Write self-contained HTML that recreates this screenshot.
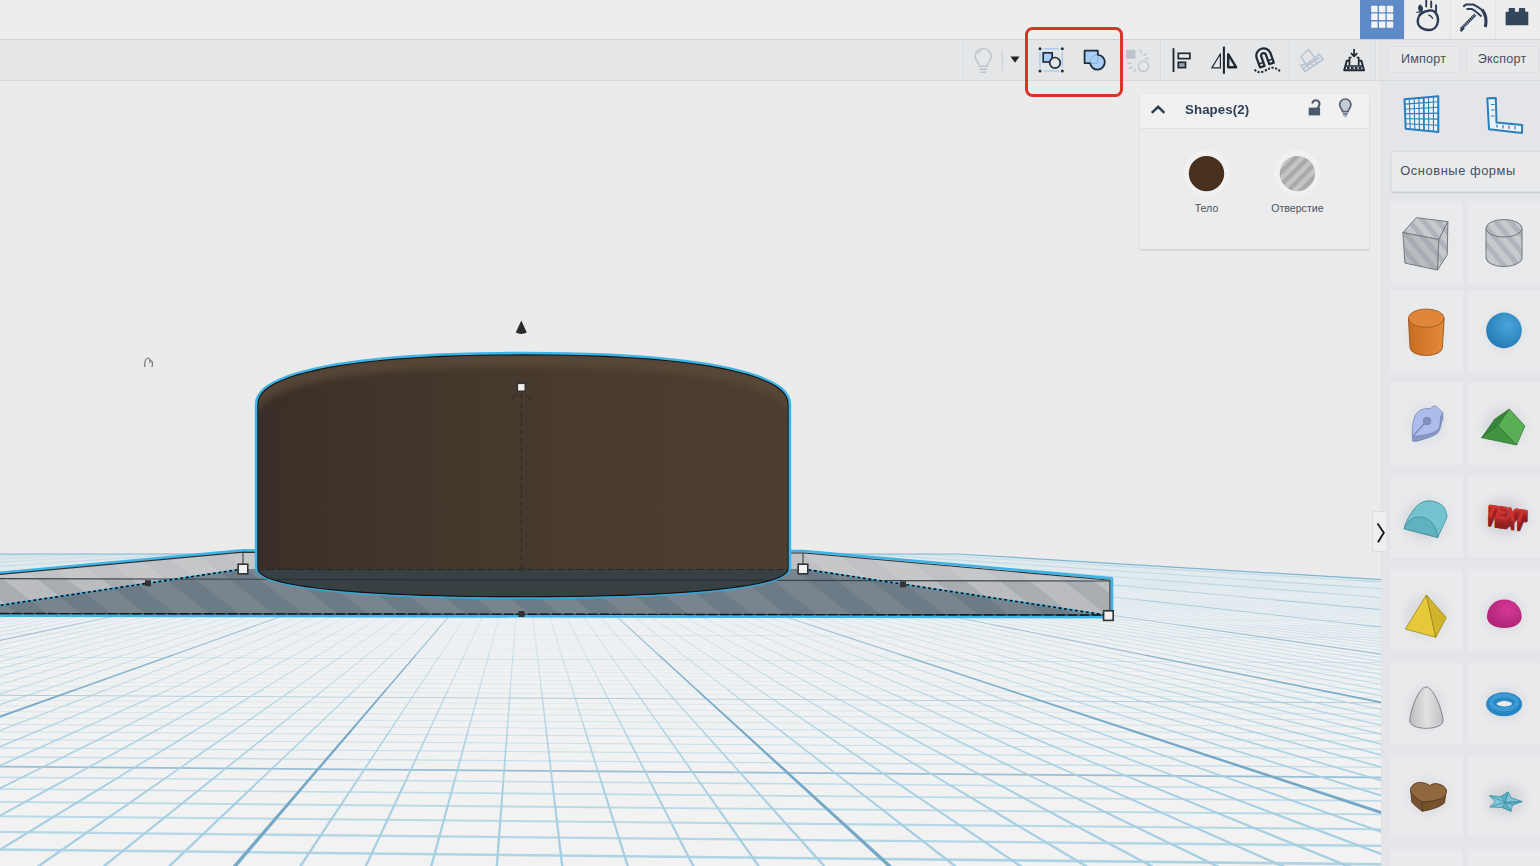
<!DOCTYPE html>
<html lang="ru"><head><meta charset="utf-8"><title>Tinkercad</title>
<style>
html,body{margin:0;padding:0;overflow:hidden}
html{width:1540px;height:866px}
body{width:1540px;height:866px;overflow:hidden;position:relative;background:#ebebeb;font-family:"Liberation Sans",sans-serif;color:#3c4858}
#scene{position:absolute;left:0;top:0}
#topbar{position:absolute;left:0;top:0;width:1540px;height:38.5px;background:#ededed}
#toolbar{position:absolute;left:0;top:38.5px;width:1540px;height:42px;background:#e5e6e8;border-top:1.5px solid #ccd2d8;border-bottom:1.5px solid #d6dadd;box-sizing:border-box}
.nav{position:absolute;top:0;height:38.5px;box-sizing:border-box;border-left:1px solid #e3e4e6}
.nav.on{background:#5f8ac8;border-left:none}
.nav svg{position:absolute;left:0;top:0}
.sep{position:absolute;top:40px;height:40px;width:1px;background:#d9dcdf;border-right:1px solid #e9ebed}
.tbtn{position:absolute;top:46px;height:27px;box-sizing:border-box;border:1px solid #dcdee1;border-radius:3px;background:#e8e9eb;font-size:12.6px;line-height:25px;text-align:center;color:#46505e;letter-spacing:.2px}
#ticons{position:absolute;left:960px;top:40px}
#redbox{position:absolute;left:1025.3px;top:27.4px;width:97.8px;height:69.6px;box-sizing:border-box;border:3.9px solid #dc3228;border-radius:7.5px}
#insp{position:absolute;left:1140px;top:93.5px;width:229px;height:155px;background:#ececec;border-radius:2px;box-shadow:0 1px 2px rgba(120,130,140,.35)}
#insp .hd{position:absolute;left:0;top:0;width:229px;height:35.5px;background:#f1f1f1;border-bottom:1px solid #dfe1e3;box-sizing:border-box}
#insp .ttl{position:absolute;left:44.5px;top:7px;font-size:13.6px;font-weight:bold;color:#2d3e54;letter-spacing:.1px;line-height:18px;transform-origin:0 50%;transform:scaleX(.975)}
.sw{position:absolute;width:46px;height:46px;border-radius:50%;background:#f1f1f1}
.lbl{position:absolute;top:108px;width:90px;text-align:center;font-size:10.6px;color:#4b5563;line-height:13px}
#side{position:absolute;left:1381px;top:81px;width:159px;height:785px;background:#e4e5e8;border-left:1px solid #dfe1e4;box-sizing:border-box}
#dd{position:absolute;left:8.8px;top:70px;width:160px;height:40.5px;box-sizing:border-box;background:#e9eaec;border:1px solid #dcdfe2;border-radius:3px;box-shadow:0 1px 1.5px rgba(120,130,140,.3);font-size:12.9px;line-height:38px;padding-left:8.5px;color:#465162;letter-spacing:.55px}
.tile{position:absolute;width:73px;background:#e9eaec;border-radius:2px}
.tile svg{position:absolute;left:0;top:0}
#collapse{position:absolute;left:1371.5px;top:511.3px;width:14.5px;height:41px;background:#efefef;border:1px solid #dcdde0;border-right:none;box-sizing:border-box;border-radius:2px 0 0 2px}
</style></head><body>

<svg id="scene" width="1540" height="866" viewBox="0 0 1540 866">
<defs>
<linearGradient id="wpg" x1="0" y1="554" x2="0" y2="866" gradientUnits="userSpaceOnUse"><stop offset="0" stop-color="#dfe9ed"/><stop offset=".06" stop-color="#e6edf0"/><stop offset=".16" stop-color="#ecf0f2"/><stop offset=".3" stop-color="#f0f1f2"/><stop offset="1" stop-color="#f2f2f2"/></linearGradient>
<linearGradient id="hg" x1="0" y1="554" x2="0" y2="866" gradientUnits="userSpaceOnUse"><stop offset="0" stop-color="#b4d7e6" stop-opacity=".08"/><stop offset=".25" stop-color="#b4d7e6" stop-opacity=".22"/><stop offset=".6" stop-color="#b0d5e5" stop-opacity=".62"/><stop offset="1" stop-color="#a9d1e3" stop-opacity=".95"/></linearGradient>
<linearGradient id="hg2" x1="0" y1="554" x2="0" y2="866" gradientUnits="userSpaceOnUse"><stop offset="0" stop-color="#8fbbd2" stop-opacity=".15"/><stop offset=".25" stop-color="#8fbbd2" stop-opacity=".5"/><stop offset=".6" stop-color="#8fbbd2" stop-opacity=".9"/><stop offset="1" stop-color="#8fbbd2" stop-opacity="1"/></linearGradient>
<linearGradient id="vg" x1="0" y1="554" x2="0" y2="866" gradientUnits="userSpaceOnUse"><stop offset="0" stop-color="#a9d1e3" stop-opacity=".3"/><stop offset=".15" stop-color="#a9d1e3" stop-opacity=".55"/><stop offset=".4" stop-color="#a9d1e3" stop-opacity=".9"/><stop offset="1" stop-color="#a9d1e3" stop-opacity="1"/></linearGradient>
<linearGradient id="vg2" x1="0" y1="554" x2="0" y2="866" gradientUnits="userSpaceOnUse"><stop offset="0" stop-color="#72a6c4" stop-opacity=".4"/><stop offset=".15" stop-color="#72a6c4" stop-opacity=".7"/><stop offset=".4" stop-color="#72a6c4" stop-opacity="1"/><stop offset="1" stop-color="#6ea2c1" stop-opacity="1"/></linearGradient>
<clipPath id="wpc"><path d="M0 554H957L1540 589.3V866H0Z"/></clipPath>
<linearGradient id="cyl" x1="256" y1="0" x2="790" y2="0" gradientUnits="userSpaceOnUse"><stop offset="0" stop-color="#3a2f28"/><stop offset=".25" stop-color="#41352b"/><stop offset=".6" stop-color="#493b2e"/><stop offset="1" stop-color="#4c3e30"/></linearGradient>
<pattern id="st1" width="64" height="64" patternUnits="userSpaceOnUse" patternTransform="skewX(52)"><rect width="64" height="64" fill="#babcbf"/><rect width="30" height="64" fill="#a9adb1"/></pattern>
<pattern id="st2" width="64" height="64" patternUnits="userSpaceOnUse" patternTransform="skewX(52)"><rect width="64" height="64" fill="#78858f"/><rect width="30" height="64" fill="#6d7b87"/></pattern>
<pattern id="st3" width="64" height="64" patternUnits="userSpaceOnUse" patternTransform="skewX(52)"><rect width="64" height="64" fill="#c5c7c9"/><rect width="30" height="64" fill="#bfc1c4"/></pattern>
<filter id="bl" x="-5%" y="-50%" width="110%" height="200%"><feGaussianBlur stdDeviation="3.5"/></filter>
<clipPath id="cylc"><path d="M258.0 405.0L258.5 400.3L260.0 396.5L262.4 392.9L265.9 389.6L270.3 386.4L275.6 383.3L281.9 380.4L289.2 377.6L297.3 375.0L306.3 372.5L316.2 370.2L327.0 368.0L338.5 366.0L350.9 364.1L364.0 362.4L378.0 360.9L392.6 359.5L408.1 358.3L424.2 357.3L441.2 356.5L459.0 355.8L477.9 355.4L498.3 355.1L523.0 355.0L547.7 355.1L568.1 355.4L587.0 355.8L604.8 356.5L621.8 357.3L637.9 358.3L653.4 359.5L668.0 360.9L682.0 362.4L695.1 364.1L707.5 366.0L719.0 368.0L729.8 370.2L739.7 372.5L748.7 375.0L756.8 377.6L764.1 380.4L770.4 383.3L775.7 386.4L780.1 389.6L783.6 392.9L786.0 396.5L787.5 400.3L788.0 405.0L788.0 568.0L787.5 570.7L786.0 572.9L783.6 574.9L780.1 576.8L775.7 578.7L770.4 580.4L764.1 582.1L756.8 583.7L748.7 585.2L739.7 586.6L729.8 587.9L719.0 589.2L707.5 590.3L695.1 591.4L682.0 592.4L668.0 593.2L653.4 594.0L637.9 594.7L621.8 595.3L604.8 595.8L587.0 596.1L568.1 596.4L547.7 596.5L523.0 596.6L498.3 596.5L477.9 596.4L459.0 596.1L441.2 595.8L424.2 595.3L408.1 594.7L392.6 594.0L378.0 593.2L364.0 592.4L350.9 591.4L338.5 590.3L327.0 589.2L316.2 587.9L306.3 586.6L297.3 585.2L289.2 583.7L281.9 582.1L275.6 580.4L270.3 578.7L265.9 576.8L262.4 574.9L260.0 572.9L258.5 570.7L258.0 568.0Z"/></clipPath>
</defs>
<path d="M0 554H957L1540 589.3V866H0Z" fill="url(#wpg)"/>
<g clip-path="url(#wpc)">
<path fill="url(#hg)" d="M0 868.03L1540 885.35V888.34L0 870.87ZM0 848.34L1540 864.65V867.31L0 850.86ZM0 830.82L1540 846.24V848.60L0 833.07ZM0 815.13L1540 829.75V831.87L0 817.16ZM0 801.00L1540 814.89V816.81L0 802.83ZM0 788.21L1540 801.44V803.18L0 789.87ZM0 776.57L1540 789.21V790.79L0 778.08ZM0 756.19L1540 767.78V769.11L0 757.46ZM0 747.21L1540 758.34V759.57L0 748.38ZM0 738.93L1540 749.62V750.76L0 740.01ZM0 731.25L1540 741.55V742.61L0 732.25ZM0 724.11L1540 734.05V735.03L0 725.05ZM0 717.47L1540 727.07V727.98L0 718.34ZM0 711.27L1540 720.55V721.40L0 712.08ZM0 705.46L1540 714.45V715.25L0 706.23ZM0 700.02L1540 708.72V709.47L0 700.74ZM0 690.09L1540 698.28V698.95L0 690.72ZM0 685.55L1540 693.51V694.14L0 686.15ZM0 681.26L1540 689.00V689.59L0 681.83ZM0 677.20L1540 684.73V685.29L0 677.74ZM0 673.36L1540 680.69V681.22L0 673.86ZM0 669.71L1540 676.85V677.36L0 670.19ZM0 666.24L1540 673.21V673.69L0 666.70ZM0 662.94L1540 669.74V670.20L0 663.38ZM0 659.80L1540 666.43V666.87L0 660.21ZM0 653.94L1540 660.28V660.67L0 654.32ZM0 651.20L1540 657.40V657.78L0 651.57ZM0 648.59L1540 654.65V655.01L0 648.94ZM0 646.08L1540 652.02V652.37L0 646.42ZM0 643.68L1540 649.49V649.83L0 644.00ZM0 641.38L1540 647.07V647.39L0 641.69ZM0 639.17L1540 644.75V645.06L0 639.46ZM0 637.04L1540 642.51V642.81L0 637.33ZM0 635.00L1540 640.37V640.65L0 635.27ZM0 631.14L1540 636.31V636.57L0 631.39ZM0 629.32L1540 634.39V634.64L0 629.56ZM0 627.56L1540 632.54V632.78L0 627.79ZM0 625.86L1540 630.75V630.99L0 626.08ZM0 624.22L1540 629.03V629.26L0 624.44ZM0 622.63L1540 627.36V627.58L0 622.84ZM0 621.10L1540 625.75V625.97L0 621.30ZM0 619.62L1540 624.19V624.40L0 619.82ZM0 618.18L1540 622.69V622.89L0 618.38ZM0 615.45L1540 619.81V620.00L0 615.63ZM0 614.15L1540 618.44V618.62L0 614.32ZM0 612.88L1540 617.11V617.29L0 613.05ZM0 611.66L1540 615.82V615.99L0 611.82ZM0 610.46L1540 614.57V614.74L0 610.62ZM0 609.31L1540 613.35V613.52L0 609.46ZM0 608.18L1540 612.17V612.33L0 608.33ZM0 607.09L1540 611.02V611.18L0 607.24ZM0 606.03L1540 609.91V610.06L0 606.17ZM0 603.99L1540 607.77V607.91L0 604.13ZM0 603.02L1540 606.74V606.88L0 603.15ZM0 602.06L1540 605.74V605.87L0 602.19ZM0 601.14L1540 604.76V604.89L0 601.26ZM0 600.23L1540 603.81V603.94L0 600.35ZM0 599.35L1540 602.88V603.01L0 599.47ZM0 598.49L1540 601.98V602.10L0 598.61ZM0 597.65L1540 601.10V601.22L0 597.77ZM0 596.84L1540 600.24V600.36L0 596.95ZM0 595.26L1540 598.58V598.69L0 595.36ZM0 594.50L1540 597.78V597.89L0 594.60ZM0 593.76L1540 597.00V597.11L0 593.85ZM0 593.03L1540 596.24V596.34L0 593.13ZM0 592.32L1540 595.49V595.59L0 592.42ZM0 591.63L1540 594.76V594.86L0 591.72ZM0 590.95L1540 594.05V594.15L0 591.04ZM0 590.29L1540 593.35V593.45L0 590.37ZM0 589.64L1540 592.67V592.76L0 589.72ZM0 588.38L1540 591.35V591.44L0 588.46ZM0 587.77L1540 590.71V590.80L0 587.85ZM0 587.18L1540 590.09V590.17L0 587.26ZM0 586.59L1540 589.47V589.55L0 586.67ZM0 586.02L1540 588.87V588.95L0 586.10ZM0 585.46L1540 588.28V588.36L0 585.54ZM0 584.91L1540 587.71V587.78L0 584.99ZM0 584.37L1540 587.14V587.22L0 584.45ZM0 583.85L1540 586.59V586.66L0 583.92ZM0 582.82L1540 585.51V585.58L0 582.89ZM0 582.33L1540 584.99V585.06L0 582.39ZM0 581.84L1540 584.47V584.54L0 581.90ZM0 581.36L1540 583.97V584.04L0 581.42ZM0 580.89L1540 583.47V583.54L0 580.95ZM0 580.43L1540 582.99V583.05L0 580.49ZM0 579.97L1540 582.51V582.58L0 580.03ZM0 579.53L1540 582.04V582.11L0 579.59ZM0 579.09L1540 581.58V581.65L0 579.15ZM0 578.24L1540 580.69V580.75L0 578.30ZM0 577.82L1540 580.25V580.31L0 577.88ZM0 577.42L1540 579.83V579.88L0 577.47ZM0 577.02L1540 579.40V579.46L0 577.07ZM0 576.62L1540 578.99V579.05L0 576.68ZM0 576.24L1540 578.58V578.64L0 576.29ZM0 575.85L1540 578.18V578.24L0 575.91ZM0 575.48L1540 577.79V577.84L0 575.53ZM0 575.11L1540 577.40V577.45L0 575.16ZM0 574.39L1540 576.65V576.70L0 574.44ZM0 574.04L1540 576.28V576.33L0 574.09ZM0 573.70L1540 575.91V575.96L0 573.74ZM0 573.36L1540 575.56V575.61L0 573.40ZM0 573.02L1540 575.21V575.25L0 573.07ZM0 572.69L1540 574.86V574.91L0 572.74ZM0 572.37L1540 574.52V574.56L0 572.41ZM0 572.05L1540 574.18V574.23L0 572.09ZM0 571.74L1540 573.85V573.90L0 571.78ZM0 571.12L1540 573.21V573.25L0 571.16ZM0 570.82L1540 572.89V572.93L0 570.86ZM0 570.52L1540 572.58V572.62L0 570.56ZM0 570.23L1540 572.27V572.31L0 570.27ZM0 569.95L1540 571.97V572.01L0 569.98ZM0 569.66L1540 571.67V571.71L0 569.70ZM0 569.38L1540 571.38V571.42L0 569.42ZM0 569.11L1540 571.09V571.13L0 569.14ZM0 568.84L1540 570.80V570.84L0 568.87ZM0 568.30L1540 570.24V570.28L0 568.34ZM0 568.04L1540 569.97V570.01L0 568.08ZM0 567.79L1540 569.70V569.74L0 567.82ZM0 567.53L1540 569.43V569.47L0 567.57ZM0 567.28L1540 569.17V569.21L0 567.32ZM0 567.04L1540 568.91V568.95L0 567.07ZM0 566.79L1540 568.66V568.69L0 566.83ZM0 566.55L1540 568.40V568.44L0 566.58ZM0 566.32L1540 568.15V568.19L0 566.35ZM0 565.85L1540 567.67V567.70L0 565.88ZM0 565.62L1540 567.43V567.46L0 565.65ZM0 565.40L1540 567.19V567.22L0 565.43ZM0 565.18L1540 566.96V566.99L0 565.21ZM0 564.96L1540 566.73V566.76L0 564.99ZM0 564.74L1540 566.50V566.53L0 564.77ZM0 564.53L1540 566.27V566.30L0 564.55ZM0 564.32L1540 566.05V566.08L0 564.34ZM0 564.11L1540 565.83V565.86L0 564.13ZM0 563.70L1540 565.40V565.43L0 563.72ZM0 563.50L1540 565.19V565.22L0 563.52ZM0 563.30L1540 564.98V565.01L0 563.32ZM0 563.10L1540 564.77V564.80L0 563.13ZM0 562.91L1540 564.57V564.60L0 562.93ZM0 562.72L1540 564.37V564.40L0 562.74ZM0 562.53L1540 564.17V564.20L0 562.55ZM0 562.34L1540 563.97V564.00L0 562.36ZM0 562.15L1540 563.78V563.81L0 562.18ZM0 561.79L1540 563.40V563.42L0 561.82ZM0 561.61L1540 563.21V563.23L0 561.64ZM0 561.44L1540 563.02V563.05L0 561.46ZM0 561.26L1540 562.84V562.86L0 561.28ZM0 561.09L1540 562.66V562.68L0 561.11ZM0 560.92L1540 562.48V562.50L0 560.94ZM0 560.75L1540 562.30V562.33L0 560.77ZM0 560.58L1540 562.13V562.15L0 560.60ZM0 560.42L1540 561.95V561.98L0 560.44ZM0 560.09L1540 561.61V561.63L0 560.11ZM0 559.93L1540 561.44V561.47L0 559.95ZM0 559.77L1540 561.28V561.30L0 559.79ZM0 559.62L1540 561.11V561.13L0 559.64ZM0 559.46L1540 560.95V560.97L0 559.48ZM0 559.31L1540 560.79V560.81L0 559.33ZM0 559.16L1540 560.63V560.65L0 559.18ZM0 559.01L1540 560.47V560.49L0 559.03ZM0 558.86L1540 560.32V560.34L0 558.88ZM0 558.57L1540 560.01V560.03L0 558.59ZM0 558.42L1540 559.86V559.88L0 558.44ZM0 558.28L1540 559.71V559.73L0 558.30ZM0 558.14L1540 559.56V559.58L0 558.16ZM0 558.00L1540 559.41V559.43L0 558.02ZM0 557.86L1540 559.27V559.29L0 557.88ZM0 557.73L1540 559.12V559.14L0 557.74ZM0 557.59L1540 558.98V559.00L0 557.61ZM0 557.46L1540 558.84V558.86L0 557.47ZM0 557.19L1540 558.56V558.58L0 557.21ZM0 557.06L1540 558.43V558.44L0 557.08ZM0 556.93L1540 558.29V558.31L0 556.95ZM0 556.81L1540 558.16V558.17L0 556.82ZM0 556.68L1540 558.02V558.04L0 556.70ZM0 556.55L1540 557.89V557.91L0 556.57ZM0 556.43L1540 557.76V557.78L0 556.45ZM0 556.31L1540 557.63V557.65L0 556.32ZM0 556.19L1540 557.50V557.52L0 556.20ZM0 555.95L1540 557.25V557.27L0 555.96ZM0 555.83L1540 557.13V557.14L0 555.84ZM0 555.71L1540 557.00V557.02L0 555.73ZM0 555.59L1540 556.88V556.90L0 555.61ZM0 555.48L1540 556.76V556.78L0 555.49ZM0 555.37L1540 556.64V556.66L0 555.38ZM0 555.25L1540 556.52V556.54L0 555.27ZM0 555.14L1540 556.41V556.42L0 555.16ZM0 555.03L1540 556.29V556.30L0 555.04ZM0 554.81L1540 556.06V556.07L0 554.83ZM0 554.70L1540 555.95V555.96L0 554.72ZM0 554.60L1540 555.83V555.85L0 554.61ZM0 554.49L1540 555.72V555.74L0 554.50ZM0 554.38L1540 555.61V555.63L0 554.40ZM0 554.28L1540 555.50V555.52L0 554.29ZM0 554.18L1540 555.39V555.41L0 554.19ZM0 554.07L1540 555.28V555.30L0 554.09ZM0 553.97L1540 555.18V555.19L0 553.99ZM0 553.77L1540 554.97V554.98L0 553.79ZM0 553.67L1540 554.86V554.88L0 553.69ZM0 553.58L1540 554.76V554.77L0 553.59ZM0 553.48L1540 554.66V554.67L0 553.49ZM0 553.38L1540 554.56V554.57L0 553.39ZM0 553.29L1540 554.46V554.47L0 553.30ZM0 553.19L1540 554.36V554.37L0 553.20ZM0 553.10L1540 554.26V554.27L0 553.11ZM0 553.00L1540 554.16V554.17L0 553.02Z"/>
<path fill="url(#hg2)" d="M0 765.81L1540 777.89V779.61L0 767.45ZM0 694.84L1540 703.28V704.12L0 695.64ZM0 656.76L1540 663.24V663.74L0 657.23ZM0 633.01L1540 638.27V638.60L0 633.32ZM0 616.78L1540 621.21V621.44L0 617.00ZM0 604.99L1540 608.81V608.98L0 605.15ZM0 596.03L1540 599.39V599.52L0 596.15ZM0 588.99L1540 592.00V592.10L0 589.09ZM0 583.32L1540 586.04V586.12L0 583.41ZM0 578.66L1540 581.13V581.20L0 578.72ZM0 574.75L1540 577.02V577.08L0 574.80ZM0 571.42L1540 573.52V573.57L0 571.47ZM0 568.56L1540 570.52V570.56L0 568.61ZM0 566.08L1540 567.90V567.94L0 566.12ZM0 563.90L1540 565.61V565.65L0 563.93ZM0 561.97L1540 563.58V563.62L0 562.00ZM0 560.25L1540 561.78V561.81L0 560.28ZM0 558.71L1540 560.16V560.18L0 558.73ZM0 557.32L1540 558.70V558.72L0 557.34ZM0 556.06L1540 557.38V557.40L0 556.08ZM0 554.92L1540 556.17V556.19L0 554.94ZM0 553.87L1540 555.07V555.09L0 553.89Z"/>
<path fill="#a6cfe2" fill-opacity=".05" d="M2.5 553L20.7 553L-251.8 565L-270.0 565ZM7.0 553L25.0 553L-245.1 565L-263.1 565ZM15.9 553L33.6 553L-231.8 565L-249.5 565ZM20.4 553L37.9 553L-225.2 565L-242.7 565ZM24.9 553L42.3 553L-218.5 565L-235.9 565ZM29.3 553L46.6 553L-211.9 565L-229.1 565ZM33.8 553L50.9 553L-205.2 565L-222.3 565ZM38.3 553L55.2 553L-198.6 565L-215.5 565ZM42.7 553L59.5 553L-191.9 565L-208.7 565ZM47.2 553L63.8 553L-185.2 565L-201.9 565ZM51.7 553L68.1 553L-178.6 565L-195.1 565ZM60.6 553L76.8 553L-165.3 565L-181.4 565ZM65.1 553L81.1 553L-158.6 565L-174.6 565ZM69.5 553L85.4 553L-152.0 565L-167.8 565ZM74.0 553L89.7 553L-145.3 565L-161.0 565ZM78.5 553L94.0 553L-138.7 565L-154.2 565ZM82.9 553L98.3 553L-132.0 565L-147.4 565ZM87.4 553L102.6 553L-125.4 565L-140.6 565ZM91.9 553L106.9 553L-118.7 565L-133.8 565ZM96.3 553L111.2 553L-112.1 565L-127.0 565ZM105.3 553L119.9 553L-98.8 565L-113.4 565ZM109.7 553L124.2 553L-92.1 565L-106.6 565ZM114.2 553L128.5 553L-85.5 565L-99.7 565ZM118.7 553L132.8 553L-78.8 565L-92.9 565ZM123.1 553L137.1 553L-72.2 565L-86.1 565ZM127.6 553L141.4 553L-65.5 565L-79.3 565ZM132.1 553L145.7 553L-58.9 565L-72.5 565ZM136.5 553L150.0 553L-52.2 565L-65.7 565ZM141.0 553L154.4 553L-45.5 565L-58.9 565ZM149.9 553L163.0 553L-32.2 565L-45.3 565ZM154.4 553L167.3 553L-25.6 565L-38.5 565ZM158.9 553L171.6 553L-18.9 565L-31.7 565ZM163.3 553L175.9 553L-12.3 565L-24.9 565ZM167.8 553L180.2 553L-5.6 565L-18.0 565ZM172.3 553L184.5 553L1.0 565L-11.2 565ZM-11.2 565L1.0 565L-228.4 580L-240.6 580ZM176.7 553L188.8 553L7.7 565L-4.4 565ZM-4.4 565L7.7 565L-218.8 580L-230.9 580ZM181.2 553L193.2 553L14.3 565L2.4 565ZM2.4 565L14.3 565L-209.2 580L-221.2 580ZM185.7 553L197.5 553L21.0 565L9.2 565ZM9.2 565L21.0 565L-199.6 580L-211.4 580ZM194.6 553L206.1 553L34.3 565L22.8 565ZM22.8 565L34.3 565L-180.5 580L-192.0 580ZM199.1 553L210.4 553L40.9 565L29.6 565ZM29.6 565L40.9 565L-170.9 580L-182.2 580ZM203.5 553L214.7 553L47.6 565L36.4 565ZM36.4 565L47.6 565L-161.3 580L-172.5 580ZM208.0 553L219.0 553L54.2 565L43.2 565ZM43.2 565L54.2 565L-151.7 580L-162.8 580ZM212.5 553L223.3 553L60.9 565L50.0 565ZM50.0 565L60.9 565L-142.2 580L-153.0 580ZM216.9 553L227.7 553L67.5 565L56.8 565ZM56.8 565L67.5 565L-132.6 580L-143.3 580ZM221.4 553L232.0 553L74.2 565L63.7 565ZM63.7 565L74.2 565L-123.0 580L-133.6 580ZM225.9 553L236.3 553L80.9 565L70.5 565ZM70.5 565L80.9 565L-113.4 580L-123.8 580ZM230.4 553L240.6 553L87.5 565L77.3 565ZM77.3 565L87.5 565L-103.8 580L-114.1 580ZM239.3 553L249.2 553L100.8 565L90.9 565ZM90.9 565L100.8 565L-84.7 580L-94.6 580ZM243.8 553L253.5 553L107.5 565L97.7 565ZM97.7 565L107.5 565L-75.1 580L-84.9 580ZM248.2 553L257.8 553L114.1 565L104.5 565ZM104.5 565L114.1 565L-65.5 580L-75.1 580ZM252.7 553L262.1 553L120.8 565L111.3 565ZM111.3 565L120.8 565L-56.0 580L-65.4 580ZM257.2 553L266.5 553L127.4 565L118.1 565ZM118.1 565L127.4 565L-46.4 580L-55.7 580ZM261.6 553L270.8 553L134.1 565L124.9 565ZM124.9 565L134.1 565L-36.8 580L-45.9 580ZM266.1 553L275.1 553L140.7 565L131.7 565ZM131.7 565L140.7 565L-27.2 580L-36.2 580ZM270.6 553L279.4 553L147.4 565L138.5 565ZM138.5 565L147.4 565L-17.6 580L-26.5 580ZM275.0 553L283.7 553L154.0 565L145.3 565ZM145.3 565L154.0 565L-8.1 580L-16.7 580ZM284.0 553L292.3 553L167.3 565L159.0 565ZM159.0 565L167.3 565L11.1 580L2.7 580ZM288.4 553L296.6 553L174.0 565L165.8 565ZM165.8 565L174.0 565L20.7 580L12.5 580ZM292.9 553L301.0 553L180.6 565L172.6 565ZM172.6 565L180.6 565L30.3 580L22.2 580ZM297.4 553L305.3 553L187.3 565L179.4 565ZM179.4 565L187.3 565L39.8 580L31.9 580ZM301.8 553L309.6 553L193.9 565L186.2 565ZM186.2 565L193.9 565L49.4 580L41.7 580ZM306.3 553L313.9 553L200.6 565L193.0 565ZM193.0 565L200.6 565L59.0 580L51.4 580ZM310.8 553L318.2 553L207.3 565L199.8 565ZM199.8 565L207.3 565L68.6 580L61.1 580ZM315.2 553L322.5 553L213.9 565L206.6 565ZM206.6 565L213.9 565L78.1 580L70.9 580ZM319.7 553L326.8 553L220.6 565L213.4 565ZM213.4 565L220.6 565L87.7 580L80.6 580ZM328.6 553L335.4 553L233.9 565L227.0 565ZM227.0 565L233.9 565L106.9 580L100.1 580ZM333.1 553L339.8 553L240.5 565L233.9 565ZM337.6 553L344.1 553L247.2 565L240.7 565ZM342.0 553L348.4 553L253.8 565L247.5 565ZM346.5 553L352.7 553L260.5 565L254.3 565ZM351.0 553L357.0 553L267.1 565L261.1 565ZM355.4 553L361.3 553L273.8 565L267.9 565ZM359.9 553L365.6 553L280.4 565L274.7 565ZM364.4 553L369.9 553L287.1 565L281.5 565ZM373.3 553L378.6 553L300.4 565L295.1 565ZM377.8 553L382.9 553L307.0 565L301.9 565ZM382.2 553L387.2 553L313.7 565L308.7 565ZM386.7 553L391.5 553L320.4 565L315.5 565ZM391.2 553L395.8 553L327.0 565L322.3 565ZM395.6 553L400.1 553L333.7 565L329.2 565ZM645.8 553L650.3 553L717.3 565L712.8 565ZM650.1 553L654.8 553L724.1 565L719.4 565ZM654.4 553L659.3 553L730.9 565L726.1 565ZM658.7 553L663.7 553L737.7 565L732.7 565ZM663.0 553L668.2 553L744.5 565L739.4 565ZM667.4 553L672.7 553L751.3 565L746.0 565ZM671.7 553L677.1 553L758.1 565L752.7 565ZM680.3 553L686.1 553L771.8 565L766.0 565ZM684.6 553L690.5 553L778.6 565L772.6 565ZM688.9 553L695.0 553L785.4 565L779.3 565ZM693.2 553L699.5 553L792.2 565L786.0 565ZM697.5 553L703.9 553L799.0 565L792.6 565ZM701.9 553L708.4 553L805.8 565L799.3 565ZM706.2 553L712.9 553L812.6 565L805.9 565ZM710.5 553L717.3 553L819.4 565L812.6 565ZM812.6 565L819.4 565L947.0 580L940.2 580ZM714.8 553L721.8 553L826.2 565L819.2 565ZM819.2 565L826.2 565L956.8 580L949.7 580ZM723.4 553L730.7 553L839.8 565L832.5 565ZM832.5 565L839.8 565L976.2 580L968.9 580ZM727.7 553L735.2 553L846.6 565L839.2 565ZM839.2 565L846.6 565L986.0 580L978.5 580ZM732.0 553L739.7 553L853.5 565L845.8 565ZM845.8 565L853.5 565L995.7 580L988.1 580ZM736.4 553L744.1 553L860.3 565L852.5 565ZM852.5 565L860.3 565L1005.4 580L997.6 580ZM740.7 553L748.6 553L867.1 565L859.1 565ZM859.1 565L867.1 565L1015.2 580L1007.2 580ZM745.0 553L753.1 553L873.9 565L865.8 565ZM865.8 565L873.9 565L1024.9 580L1016.8 580ZM749.3 553L757.5 553L880.7 565L872.4 565ZM872.4 565L880.7 565L1034.6 580L1026.4 580ZM753.6 553L762.0 553L887.5 565L879.1 565ZM879.1 565L887.5 565L1044.4 580L1036.0 580ZM757.9 553L766.5 553L894.3 565L885.7 565ZM885.7 565L894.3 565L1054.1 580L1045.5 580ZM766.5 553L775.4 553L907.9 565L899.1 565ZM899.1 565L907.9 565L1073.6 580L1064.7 580ZM770.8 553L779.9 553L914.7 565L905.7 565ZM905.7 565L914.7 565L1083.3 580L1074.3 580ZM775.2 553L784.3 553L921.5 565L912.4 565ZM912.4 565L921.5 565L1093.0 580L1083.9 580ZM779.5 553L788.8 553L928.3 565L919.0 565ZM919.0 565L928.3 565L1102.8 580L1093.4 580ZM783.8 553L793.3 553L935.2 565L925.7 565ZM925.7 565L935.2 565L1112.5 580L1103.0 580ZM788.1 553L797.7 553L942.0 565L932.3 565ZM932.3 565L942.0 565L1122.2 580L1112.6 580ZM792.4 553L802.2 553L948.8 565L939.0 565ZM939.0 565L948.8 565L1132.0 580L1122.2 580ZM796.7 553L806.7 553L955.6 565L945.6 565ZM945.6 565L955.6 565L1141.7 580L1131.7 580ZM801.0 553L811.1 553L962.4 565L952.3 565ZM952.3 565L962.4 565L1151.4 580L1141.3 580ZM809.6 553L820.1 553L976.0 565L965.6 565ZM965.6 565L976.0 565L1170.9 580L1160.5 580ZM814.0 553L824.5 553L982.8 565L972.2 565ZM972.2 565L982.8 565L1180.6 580L1170.1 580ZM818.3 553L829.0 553L989.6 565L978.9 565ZM978.9 565L989.6 565L1190.4 580L1179.6 580ZM822.6 553L833.5 553L996.4 565L985.5 565ZM985.5 565L996.4 565L1200.1 580L1189.2 580ZM826.9 553L837.9 553L1003.2 565L992.2 565ZM992.2 565L1003.2 565L1209.8 580L1198.8 580ZM831.2 553L842.4 553L1010.0 565L998.8 565ZM998.8 565L1010.0 565L1219.6 580L1208.4 580ZM835.5 553L846.9 553L1016.9 565L1005.5 565ZM1005.5 565L1016.9 565L1229.3 580L1218.0 580ZM839.8 553L851.3 553L1023.7 565L1012.1 565ZM1012.1 565L1023.7 565L1239.1 580L1227.5 580ZM844.1 553L855.8 553L1030.5 565L1018.8 565ZM1018.8 565L1030.5 565L1248.8 580L1237.1 580ZM852.8 553L864.7 553L1044.1 565L1032.1 565ZM1032.1 565L1044.1 565L1268.3 580L1256.3 580ZM857.1 553L869.2 553L1050.9 565L1038.8 565ZM1038.8 565L1050.9 565L1278.0 580L1265.9 580ZM1265.9 580L1278.0 580L1580.8 600L1568.6 600ZM861.4 553L873.7 553L1057.7 565L1045.4 565ZM1045.4 565L1057.7 565L1287.7 580L1275.4 580ZM1275.4 580L1287.7 580L1594.4 600L1582.1 600ZM865.7 553L878.1 553L1064.5 565L1052.1 565ZM1052.1 565L1064.5 565L1297.5 580L1285.0 580ZM1285.0 580L1297.5 580L1608.1 600L1595.6 600ZM870.0 553L882.6 553L1071.3 565L1058.7 565ZM1058.7 565L1071.3 565L1307.2 580L1294.6 580ZM1294.6 580L1307.2 580L1621.7 600L1609.1 600ZM874.3 553L887.1 553L1078.1 565L1065.4 565ZM1065.4 565L1078.1 565L1316.9 580L1304.2 580ZM1304.2 580L1316.9 580L1635.3 600L1622.6 600ZM878.6 553L891.6 553L1084.9 565L1072.0 565ZM1072.0 565L1084.9 565L1326.7 580L1313.7 580ZM1313.7 580L1326.7 580L1649.0 600L1636.0 600ZM882.9 553L896.0 553L1091.7 565L1078.7 565ZM1078.7 565L1091.7 565L1336.4 580L1323.3 580ZM1323.3 580L1336.4 580L1662.6 600L1649.5 600ZM887.3 553L900.5 553L1098.5 565L1085.3 565ZM1085.3 565L1098.5 565L1346.1 580L1332.9 580ZM1332.9 580L1346.1 580L1676.2 600L1663.0 600ZM895.9 553L909.4 553L1112.2 565L1098.6 565ZM1098.6 565L1112.2 565L1365.6 580L1352.1 580ZM1352.1 580L1365.6 580L1703.5 600L1690.0 600ZM900.2 553L913.9 553L1119.0 565L1105.3 565ZM1105.3 565L1119.0 565L1375.3 580L1361.6 580ZM1361.6 580L1375.3 580L1717.1 600L1703.4 600Z"/>
<path fill="#a6cfe2" fill-opacity=".10" d="M2.7 580L11.1 580L-197.2 600L-205.6 600ZM12.5 580L20.7 580L-183.7 600L-192.0 600ZM22.2 580L30.3 580L-170.3 600L-178.3 600ZM31.9 580L39.8 580L-156.8 600L-164.7 600ZM41.7 580L49.4 580L-143.3 600L-151.1 600ZM51.4 580L59.0 580L-129.8 600L-137.4 600ZM61.1 580L68.6 580L-116.3 600L-123.8 600ZM70.9 580L78.1 580L-102.9 600L-110.1 600ZM233.9 565L240.5 565L116.5 580L109.8 580ZM240.7 565L247.2 565L126.0 580L119.5 580ZM247.5 565L253.8 565L135.6 580L129.3 580ZM254.3 565L260.5 565L145.2 580L139.0 580ZM261.1 565L267.1 565L154.8 580L148.7 580ZM267.9 565L273.8 565L164.4 580L158.5 580ZM274.7 565L280.4 565L173.9 580L168.2 580ZM281.5 565L287.1 565L183.5 580L177.9 580ZM295.1 565L300.4 565L202.7 580L197.4 580ZM301.9 565L307.0 565L212.3 580L207.1 580ZM308.7 565L313.7 565L221.8 580L216.9 580ZM315.5 565L320.4 565L231.4 580L226.6 580ZM322.3 565L327.0 565L241.0 580L236.3 580ZM329.2 565L333.7 565L250.6 580L246.1 580ZM400.1 553L404.4 553L340.3 565L336.0 565ZM336.0 565L340.3 565L260.2 580L255.8 580ZM404.6 553L408.8 553L347.0 565L342.8 565ZM342.8 565L347.0 565L269.7 580L265.5 580ZM409.0 553L413.1 553L353.6 565L349.6 565ZM418.0 553L421.7 553L366.9 565L363.2 565ZM422.4 553L426.0 553L373.6 565L370.0 565ZM426.9 553L430.3 553L380.2 565L376.8 565ZM431.3 553L434.6 553L386.9 565L383.6 565ZM435.8 553L438.9 553L393.5 565L390.4 565ZM440.3 553L443.3 553L400.2 565L397.2 565ZM444.7 553L447.6 553L406.9 565L404.0 565ZM449.2 553L451.9 553L413.5 565L410.8 565ZM594.0 553L596.8 553L635.6 565L632.9 565ZM598.4 553L601.2 553L642.4 565L639.6 565ZM602.7 553L605.7 553L649.2 565L646.2 565ZM607.0 553L610.1 553L656.0 565L652.9 565ZM611.3 553L614.6 553L662.9 565L659.5 565ZM615.6 553L619.1 553L669.7 565L666.2 565ZM619.9 553L623.5 553L676.5 565L672.8 565ZM624.2 553L628.0 553L683.3 565L679.5 565ZM628.5 553L632.5 553L690.1 565L686.2 565ZM637.2 553L641.4 553L703.7 565L699.5 565ZM699.5 565L703.7 565L781.5 580L777.3 580ZM641.5 553L645.9 553L710.5 565L706.1 565ZM706.1 565L710.5 565L791.3 580L786.9 580ZM712.8 565L717.3 565L801.0 580L796.5 580ZM719.4 565L724.1 565L810.7 580L806.1 580ZM726.1 565L730.9 565L820.5 580L815.6 580ZM732.7 565L737.7 565L830.2 580L825.2 580ZM739.4 565L744.5 565L840.0 580L834.8 580ZM746.0 565L751.3 565L849.7 580L844.4 580ZM752.7 565L758.1 565L859.4 580L854.0 580ZM766.0 565L771.8 565L878.9 580L873.1 580ZM772.6 565L778.6 565L888.6 580L882.7 580ZM779.3 565L785.4 565L898.4 580L892.3 580ZM786.0 565L792.2 565L908.1 580L901.9 580ZM792.6 565L799.0 565L917.8 580L911.4 580ZM799.3 565L805.8 565L927.6 580L921.0 580ZM805.9 565L812.6 565L937.3 580L930.6 580ZM968.9 580L976.2 580L1158.1 600L1150.8 600ZM978.5 580L986.0 580L1171.7 600L1164.2 600ZM988.1 580L995.7 580L1185.3 600L1177.7 600ZM997.6 580L1005.4 580L1199.0 600L1191.2 600ZM1007.2 580L1015.2 580L1212.6 600L1204.7 600ZM1016.8 580L1024.9 580L1226.2 600L1218.2 600ZM1026.4 580L1034.6 580L1239.9 600L1231.6 600ZM1036.0 580L1044.4 580L1253.5 600L1245.1 600ZM1045.5 580L1054.1 580L1267.2 600L1258.6 600ZM1064.7 580L1073.6 580L1294.4 600L1285.6 600ZM1074.3 580L1083.3 580L1308.1 600L1299.0 600ZM1083.9 580L1093.0 580L1321.7 600L1312.5 600ZM1093.4 580L1102.8 580L1335.3 600L1326.0 600ZM1103.0 580L1112.5 580L1349.0 600L1339.5 600ZM1112.6 580L1122.2 580L1362.6 600L1353.0 600ZM1122.2 580L1132.0 580L1376.2 600L1366.4 600ZM1131.7 580L1141.7 580L1389.9 600L1379.9 600ZM1141.3 580L1151.4 580L1403.5 600L1393.4 600ZM1160.5 580L1170.9 580L1430.8 600L1420.4 600ZM1170.1 580L1180.6 580L1444.4 600L1433.8 600ZM1179.6 580L1190.4 580L1458.1 600L1447.3 600ZM1189.2 580L1200.1 580L1471.7 600L1460.8 600ZM1198.8 580L1209.8 580L1485.3 600L1474.3 600ZM1208.4 580L1219.6 580L1499.0 600L1487.8 600ZM1218.0 580L1229.3 580L1512.6 600L1501.2 600ZM1227.5 580L1239.1 580L1526.2 600L1514.7 600ZM1237.1 580L1248.8 580L1539.9 600L1528.2 600ZM1256.3 580L1268.3 580L1567.1 600L1555.2 600Z"/>
<path fill="#a6cfe2" fill-opacity=".15" d="M80.6 580L87.7 580L-89.4 600L-96.5 600ZM100.1 580L106.9 580L-62.4 600L-69.2 600ZM109.8 580L116.5 580L-48.9 600L-55.6 600ZM119.5 580L126.0 580L-35.5 600L-42.0 600ZM129.3 580L135.6 580L-22.0 600L-28.3 600ZM139.0 580L145.2 580L-8.5 600L-14.7 600ZM148.7 580L154.8 580L5.0 600L-1.1 600ZM158.5 580L164.4 580L18.5 600L12.6 600ZM168.2 580L173.9 580L31.9 600L26.2 600ZM177.9 580L183.5 580L45.4 600L39.8 600ZM197.4 580L202.7 580L72.4 600L67.1 600ZM349.6 565L353.6 565L279.3 580L275.3 580ZM363.2 565L366.9 565L298.5 580L294.7 580ZM370.0 565L373.6 565L308.1 580L304.5 580ZM376.8 565L380.2 565L317.6 580L314.2 580ZM383.6 565L386.9 565L327.2 580L323.9 580ZM390.4 565L393.5 565L336.8 580L333.7 580ZM397.2 565L400.2 565L346.4 580L343.4 580ZM453.7 553L456.2 553L420.2 565L417.6 565ZM462.6 553L464.8 553L433.5 565L431.2 565ZM467.1 553L469.2 553L440.1 565L438.0 565ZM471.5 553L473.5 553L446.8 565L444.8 565ZM476.0 553L477.8 553L453.5 565L451.6 565ZM568.1 553L570.0 553L594.8 565L593.0 565ZM572.5 553L574.4 553L601.6 565L599.6 565ZM576.8 553L578.9 553L608.4 565L606.3 565ZM581.1 553L583.4 553L615.2 565L612.9 565ZM585.4 553L587.8 553L622.0 565L619.6 565ZM646.2 565L649.2 565L703.7 580L700.7 580ZM652.9 565L656.0 565L713.4 580L710.3 580ZM659.5 565L662.9 565L723.2 580L719.8 580ZM666.2 565L669.7 565L732.9 580L729.4 580ZM672.8 565L676.5 565L742.6 580L739.0 580ZM679.5 565L683.3 565L752.4 580L748.6 580ZM686.2 565L690.1 565L762.1 580L758.2 580ZM844.4 580L849.7 580L980.8 600L975.5 600ZM854.0 580L859.4 580L994.4 600L989.0 600ZM873.1 580L878.9 580L1021.7 600L1015.9 600ZM882.7 580L888.6 580L1035.3 600L1029.4 600ZM892.3 580L898.4 580L1049.0 600L1042.9 600ZM901.9 580L908.1 580L1062.6 600L1056.4 600ZM911.4 580L917.8 580L1076.3 600L1069.9 600ZM921.0 580L927.6 580L1089.9 600L1083.3 600ZM930.6 580L937.3 580L1103.5 600L1096.8 600ZM940.2 580L947.0 580L1117.2 600L1110.3 600ZM949.7 580L956.8 580L1130.8 600L1123.8 600ZM1366.4 600L1376.2 600L1681.6 625L1671.8 625ZM1379.9 600L1389.9 600L1700.1 625L1690.1 625Z"/>
<path fill="#a6cfe2" fill-opacity=".20" d="M207.1 580L212.3 580L85.9 600L80.8 600ZM216.9 580L221.8 580L99.4 600L94.4 600ZM226.6 580L231.4 580L112.8 600L108.0 600ZM236.3 580L241.0 580L126.3 600L121.7 600ZM246.1 580L250.6 580L139.8 600L135.3 600ZM255.8 580L260.2 580L153.3 600L148.9 600ZM265.5 580L269.7 580L166.8 600L162.6 600ZM275.3 580L279.3 580L180.2 600L176.2 600ZM404.0 565L406.9 565L356.0 580L353.1 580ZM410.8 565L413.5 565L365.5 580L362.9 580ZM417.6 565L420.2 565L375.1 580L372.6 580ZM431.2 565L433.5 565L394.3 580L392.1 580ZM438.0 565L440.1 565L403.9 580L401.8 580ZM444.8 565L446.8 565L413.5 580L411.5 580ZM451.6 565L453.5 565L423.0 580L421.2 580ZM480.4 553L482.1 553L460.1 565L458.4 565ZM458.4 565L460.1 565L432.6 580L431.0 580ZM484.9 553L486.4 553L466.8 565L465.2 565ZM465.2 565L466.8 565L442.2 580L440.7 580ZM489.3 553L490.8 553L473.4 565L472.0 565ZM472.0 565L473.4 565L451.8 580L450.4 580ZM493.8 553L495.1 553L480.1 565L478.8 565ZM478.8 565L480.1 565L461.4 580L460.1 580ZM498.2 553L499.4 553L486.8 565L485.6 565ZM485.6 565L486.8 565L471.0 580L469.8 580ZM507.1 553L508.1 553L500.1 565L499.2 565ZM499.2 565L500.1 565L490.2 580L489.3 580ZM511.6 553L512.4 553L506.8 565L506.0 565ZM506.0 565L506.8 565L499.8 580L499.0 580ZM516.0 553L516.8 553L513.5 565L512.7 565ZM512.7 565L513.5 565L509.5 580L508.6 580ZM520.4 553L521.2 553L520.3 565L519.5 565ZM519.5 565L520.3 565L519.1 580L518.3 580ZM524.8 553L525.6 553L527.0 565L526.2 565ZM526.2 565L527.0 565L528.8 580L528.0 580ZM529.1 553L530.0 553L533.7 565L532.9 565ZM532.9 565L533.7 565L538.4 580L537.6 580ZM533.5 553L534.4 553L540.5 565L539.6 565ZM539.6 565L540.5 565L548.1 580L547.2 580ZM537.8 553L538.8 553L547.3 565L546.3 565ZM546.3 565L547.3 565L557.8 580L556.8 580ZM542.2 553L543.3 553L554.0 565L553.0 565ZM553.0 565L554.0 565L567.5 580L566.5 580ZM550.8 553L552.2 553L567.6 565L566.3 565ZM566.3 565L567.6 565L587.0 580L585.7 580ZM555.2 553L556.6 553L574.4 565L573.0 565ZM573.0 565L574.4 565L596.7 580L595.2 580ZM559.5 553L561.1 553L581.2 565L579.6 565ZM579.6 565L581.2 565L606.4 580L604.8 580ZM563.8 553L565.5 553L588.0 565L586.3 565ZM586.3 565L588.0 565L616.1 580L614.4 580ZM593.0 565L594.8 565L625.8 580L624.0 580ZM599.6 565L601.6 565L635.6 580L633.6 580ZM606.3 565L608.4 565L645.3 580L643.2 580ZM612.9 565L615.2 565L655.0 580L652.8 580ZM619.6 565L622.0 565L664.8 580L662.3 580ZM632.9 565L635.6 565L684.2 580L681.5 580ZM639.6 565L642.4 565L694.0 580L691.1 580ZM777.3 580L781.5 580L885.4 600L881.1 600ZM786.9 580L791.3 580L899.0 600L894.6 600ZM796.5 580L801.0 580L912.6 600L908.1 600ZM806.1 580L810.7 580L926.3 600L921.6 600ZM815.6 580L820.5 580L939.9 600L935.1 600ZM825.2 580L830.2 580L953.5 600L948.5 600ZM834.8 580L840.0 580L967.2 600L962.0 600ZM1177.7 600L1185.3 600L1422.4 625L1414.8 625ZM1191.2 600L1199.0 600L1440.9 625L1433.1 625ZM1204.7 600L1212.6 600L1459.4 625L1451.5 625ZM1218.2 600L1226.2 600L1477.9 625L1469.8 625ZM1231.6 600L1239.9 600L1496.5 625L1488.2 625ZM1245.1 600L1253.5 600L1515.0 625L1506.6 625ZM1258.6 600L1267.2 600L1533.5 625L1524.9 625ZM1285.6 600L1294.4 600L1570.5 625L1561.6 625ZM1299.0 600L1308.1 600L1589.0 625L1580.0 625ZM1312.5 600L1321.7 600L1607.5 625L1598.3 625ZM1326.0 600L1335.3 600L1626.0 625L1616.7 625ZM1339.5 600L1349.0 600L1644.6 625L1635.1 625ZM1353.0 600L1362.6 600L1663.1 625L1653.4 625Z"/>
<path fill="#a6cfe2" fill-opacity=".25" d="M294.7 580L298.5 580L207.2 600L203.5 600ZM304.5 580L308.1 580L220.7 600L217.1 600ZM314.2 580L317.6 580L234.2 600L230.7 600ZM323.9 580L327.2 580L247.7 600L244.4 600ZM333.7 580L336.8 580L261.1 600L258.0 600ZM343.4 580L346.4 580L274.6 600L271.6 600ZM353.1 580L356.0 580L288.1 600L285.3 600ZM362.9 580L365.5 580L301.6 600L298.9 600ZM372.6 580L375.1 580L315.1 600L312.5 600ZM392.1 580L394.3 580L342.0 600L339.8 600ZM401.8 580L403.9 580L355.5 600L353.4 600ZM411.5 580L413.5 580L369.0 600L367.1 600ZM421.2 580L423.0 580L382.5 600L380.7 600ZM431.0 580L432.6 580L396.0 600L394.3 600ZM440.7 580L442.2 580L409.5 600L407.9 600ZM450.4 580L451.8 580L423.0 600L421.6 600ZM460.1 580L461.4 580L436.5 600L435.2 600ZM469.8 580L471.0 580L450.0 600L448.8 600ZM489.3 580L490.2 580L477.0 600L476.0 600ZM499.0 580L499.8 580L490.5 600L489.6 600ZM508.6 580L509.5 580L504.0 600L503.2 600ZM518.3 580L519.1 580L517.6 600L516.8 600ZM528.0 580L528.8 580L531.1 600L530.3 600ZM537.6 580L538.4 580L544.7 600L543.9 600ZM547.2 580L548.1 580L558.3 600L557.4 600ZM556.8 580L557.8 580L571.9 600L570.9 600ZM566.5 580L567.5 580L585.5 600L584.4 600ZM585.7 580L587.0 580L612.7 600L611.4 600ZM595.2 580L596.7 580L626.4 600L624.9 600ZM604.8 580L606.4 580L640.0 600L638.4 600ZM614.4 580L616.1 580L653.6 600L651.9 600ZM624.0 580L625.8 580L667.2 600L665.4 600ZM633.6 580L635.6 580L680.9 600L678.9 600ZM643.2 580L645.3 580L694.5 600L692.4 600ZM652.8 580L655.0 580L708.1 600L705.9 600ZM662.3 580L664.8 580L721.8 600L719.3 600ZM681.5 580L684.2 580L749.0 600L746.3 600ZM691.1 580L694.0 580L762.7 600L759.8 600ZM700.7 580L703.7 580L776.3 600L773.3 600ZM710.3 580L713.4 580L789.9 600L786.8 600ZM719.8 580L723.2 580L803.6 600L800.2 600ZM729.4 580L732.9 580L817.2 600L813.7 600ZM739.0 580L742.6 580L830.8 600L827.2 600ZM748.6 580L752.4 580L844.5 600L840.7 600ZM758.2 580L762.1 580L858.1 600L854.2 600ZM1056.4 600L1062.6 600L1255.8 625L1249.6 625ZM1069.9 600L1076.3 600L1274.3 625L1267.9 625ZM1083.3 600L1089.9 600L1292.8 625L1286.3 625ZM1096.8 600L1103.5 600L1311.3 625L1304.6 625ZM1110.3 600L1117.2 600L1329.8 625L1323.0 625ZM1123.8 600L1130.8 600L1348.4 625L1341.3 625ZM1150.8 600L1158.1 600L1385.4 625L1378.1 625ZM1164.2 600L1171.7 600L1403.9 625L1396.4 625Z"/>
<path fill="#a6cfe2" fill-opacity=".30" d="M-1.1 600L5.0 600L-182.3 625L-188.3 625ZM12.6 600L18.5 600L-163.9 625L-169.8 625ZM26.2 600L31.9 600L-145.5 625L-151.3 625ZM39.8 600L45.4 600L-127.2 625L-132.8 625ZM67.1 600L72.4 600L-90.5 625L-95.7 625ZM80.8 600L85.9 600L-72.1 625L-77.2 625ZM94.4 600L99.4 600L-53.7 625L-58.7 625ZM948.5 600L953.5 600L1107.7 625L1102.7 625ZM962.0 600L967.2 600L1126.2 625L1121.0 625ZM975.5 600L980.8 600L1144.7 625L1139.4 625ZM989.0 600L994.4 600L1163.2 625L1157.8 625ZM1015.9 600L1021.7 600L1200.2 625L1194.5 625ZM1029.4 600L1035.3 600L1218.8 625L1212.8 625ZM1042.9 600L1049.0 600L1237.3 625L1231.2 625Z"/>
<path fill="#a6cfe2" fill-opacity=".35" d="M108.0 600L112.8 600L-35.4 625L-40.2 625ZM121.7 600L126.3 600L-17.0 625L-21.7 625ZM135.3 600L139.8 600L1.3 625L-3.2 625ZM148.9 600L153.3 600L19.7 625L15.3 625ZM162.6 600L166.8 600L38.0 625L33.8 625ZM176.2 600L180.2 600L56.4 625L52.4 625ZM203.5 600L207.2 600L93.1 625L89.4 625ZM217.1 600L220.7 600L111.5 625L107.9 625ZM230.7 600L234.2 600L129.8 625L126.4 625ZM244.4 600L247.7 600L148.2 625L144.9 625ZM258.0 600L261.1 600L166.6 625L163.4 625ZM271.6 600L274.6 600L184.9 625L181.9 625ZM285.3 600L288.1 600L203.3 625L200.4 625ZM298.9 600L301.6 600L221.6 625L219.0 625ZM312.5 600L315.1 600L240.0 625L237.5 625ZM339.8 600L342.0 600L276.7 625L274.5 625ZM353.4 600L355.5 600L295.1 625L293.0 625ZM367.1 600L369.0 600L313.4 625L311.5 625ZM380.7 600L382.5 600L331.8 625L330.0 625ZM394.3 600L396.0 600L350.2 625L348.5 625ZM407.9 600L409.5 600L368.5 625L367.0 625ZM421.6 600L423.0 600L386.9 625L385.5 625ZM435.2 600L436.5 600L405.3 625L404.0 625ZM448.8 600L450.0 600L423.7 625L422.5 625ZM476.0 600L477.0 600L460.4 625L459.5 625ZM489.6 600L490.5 600L478.8 625L477.9 625ZM503.2 600L504.0 600L497.2 625L496.4 625ZM516.8 600L517.6 600L515.7 625L514.9 625ZM530.3 600L531.1 600L534.1 625L533.3 625ZM543.9 600L544.7 600L552.6 625L551.7 625ZM557.4 600L558.3 600L571.0 625L570.1 625ZM570.9 600L571.9 600L589.5 625L588.5 625ZM584.4 600L585.5 600L608.0 625L606.9 625ZM611.4 600L612.7 600L645.0 625L643.7 625ZM624.9 600L626.4 600L663.5 625L662.0 625ZM638.4 600L640.0 600L682.0 625L680.4 625ZM651.9 600L653.6 600L700.5 625L698.8 625ZM665.4 600L667.2 600L719.0 625L717.1 625ZM678.9 600L680.9 600L737.5 625L735.5 625ZM692.4 600L694.5 600L756.0 625L753.9 625ZM705.9 600L708.1 600L774.5 625L772.2 625ZM719.3 600L721.8 600L793.0 625L790.6 625ZM746.3 600L749.0 600L830.0 625L827.3 625ZM759.8 600L762.7 600L848.5 625L845.7 625ZM773.3 600L776.3 600L867.0 625L864.0 625ZM786.8 600L789.9 600L885.5 625L882.4 625ZM800.2 600L803.6 600L904.1 625L900.7 625ZM813.7 600L817.2 600L922.6 625L919.1 625ZM827.2 600L830.8 600L941.1 625L937.5 625ZM840.7 600L844.5 600L959.6 625L955.8 625ZM854.2 600L858.1 600L978.1 625L974.2 625ZM881.1 600L885.4 600L1015.1 625L1010.9 625ZM894.6 600L899.0 600L1033.6 625L1029.3 625ZM908.1 600L912.6 600L1052.2 625L1047.6 625ZM921.6 600L926.3 600L1070.7 625L1066.0 625ZM935.1 600L939.9 600L1089.2 625L1084.3 625Z"/>
<path fill="#a6cfe2" fill-opacity=".40" d="M1304.6 625L1311.3 625L1561.2 655L1553.5 655ZM1323.0 625L1329.8 625L1585.6 655L1577.7 655ZM1341.3 625L1348.4 625L1609.9 655L1601.9 655ZM1378.1 625L1385.4 625L1658.7 655L1650.3 655Z"/>
<path fill="#a6cfe2" fill-opacity=".45" d="M-3.2 625L1.3 625L-164.5 655L-169.7 655ZM15.3 625L19.7 625L-140.3 655L-145.3 655ZM33.8 625L38.0 625L-116.1 655L-120.9 655ZM52.4 625L56.4 625L-91.9 655L-96.6 655ZM89.4 625L93.1 625L-43.5 655L-47.8 655ZM107.9 625L111.5 625L-19.3 655L-23.4 655ZM126.4 625L129.8 625L4.9 655L0.9 655ZM144.9 625L148.2 625L29.1 655L25.3 655ZM163.4 625L166.6 625L53.3 655L49.7 655ZM181.9 625L184.9 625L77.5 655L74.1 655ZM200.4 625L203.3 625L101.7 655L98.4 655ZM219.0 625L221.6 625L125.9 655L122.8 655ZM237.5 625L240.0 625L150.1 655L147.2 655ZM274.5 625L276.7 625L198.5 655L195.9 655ZM293.0 625L295.1 625L222.7 655L220.3 655ZM311.5 625L313.4 625L246.9 655L244.7 655ZM330.0 625L331.8 625L271.1 655L269.0 655ZM348.5 625L350.2 625L295.3 655L293.4 655ZM367.0 625L368.5 625L319.5 655L317.8 655ZM385.5 625L386.9 625L343.8 655L342.1 655ZM404.0 625L405.3 625L368.0 655L366.5 655ZM422.5 625L423.7 625L392.2 655L390.9 655ZM459.5 625L460.4 625L440.7 655L439.5 655ZM477.9 625L478.8 625L464.9 655L463.9 655ZM496.4 625L497.2 625L489.2 655L488.2 655ZM514.9 625L515.7 625L513.4 655L512.5 655ZM533.3 625L534.1 625L537.7 655L536.8 655ZM551.7 625L552.6 625L562.0 655L561.1 655ZM570.1 625L571.0 625L586.3 655L585.3 655ZM588.5 625L589.5 625L610.7 655L609.6 655ZM606.9 625L608.0 625L635.0 655L633.8 655ZM643.7 625L645.0 625L683.7 655L682.2 655ZM662.0 625L663.5 625L708.1 655L706.4 655ZM680.4 625L682.0 625L732.5 655L730.7 655ZM698.8 625L700.5 625L756.8 655L754.9 655ZM717.1 625L719.0 625L781.2 655L779.1 655ZM735.5 625L737.5 625L805.6 655L803.3 655ZM753.9 625L756.0 625L829.9 655L827.5 655ZM772.2 625L774.5 625L854.3 655L851.7 655ZM790.6 625L793.0 625L878.7 655L875.9 655ZM827.3 625L830.0 625L927.4 655L924.3 655ZM845.7 625L848.5 625L951.8 655L948.5 655ZM864.0 625L867.0 625L976.2 655L972.7 655ZM882.4 625L885.5 625L1000.5 655L996.9 655ZM900.7 625L904.1 625L1024.9 655L1021.1 655ZM919.1 625L922.6 625L1049.3 655L1045.3 655ZM937.5 625L941.1 625L1073.7 655L1069.5 655ZM955.8 625L959.6 625L1098.0 655L1093.7 655ZM974.2 625L978.1 625L1122.4 655L1117.9 655ZM1010.9 625L1015.1 625L1171.2 655L1166.3 655ZM1029.3 625L1033.6 625L1195.5 655L1190.5 655ZM1047.6 625L1052.2 625L1219.9 655L1214.7 655ZM1066.0 625L1070.7 625L1244.3 655L1238.9 655ZM1084.3 625L1089.2 625L1268.7 655L1263.1 655ZM1102.7 625L1107.7 625L1293.0 655L1287.3 655ZM1121.0 625L1126.2 625L1317.4 655L1311.5 655ZM1139.4 625L1144.7 625L1341.8 655L1335.7 655ZM1157.8 625L1163.2 625L1366.2 655L1359.9 655ZM1194.5 625L1200.2 625L1414.9 655L1408.3 655ZM1212.8 625L1218.8 625L1439.3 655L1432.5 655ZM1231.2 625L1237.3 625L1463.7 655L1456.7 655ZM1249.6 625L1255.8 625L1488.1 655L1480.9 655ZM1267.9 625L1274.3 625L1512.4 655L1505.1 655ZM1286.3 625L1292.8 625L1536.8 655L1529.3 655Z"/>
<path fill="#a6cfe2" fill-opacity=".60" d="M0.9 655L4.9 655L-140.6 690L-145.7 690ZM25.3 655L29.1 655L-109.6 690L-114.5 690ZM49.7 655L53.3 655L-78.6 690L-83.2 690ZM74.1 655L77.5 655L-47.6 690L-52.0 690ZM98.4 655L101.7 655L-16.6 690L-20.8 690ZM122.8 655L125.9 655L14.4 690L10.5 690ZM147.2 655L150.1 655L45.4 690L41.7 690ZM195.9 655L198.5 655L107.4 690L104.1 690ZM220.3 655L222.7 655L138.4 690L135.4 690ZM244.7 655L246.9 655L169.4 690L166.6 690ZM269.0 655L271.1 655L200.5 690L197.8 690ZM293.4 655L295.3 655L231.5 690L229.0 690ZM317.8 655L319.5 655L262.5 690L260.2 690ZM342.1 655L343.8 655L293.5 690L291.4 690ZM366.5 655L368.0 655L324.5 690L322.6 690ZM390.9 655L392.2 655L355.6 690L353.8 690ZM439.5 655L440.7 655L417.6 690L416.2 690ZM463.9 655L464.9 655L448.7 690L447.4 690ZM488.2 655L489.2 655L479.8 690L478.6 690ZM512.5 655L513.4 655L510.9 690L509.7 690ZM536.8 655L537.7 655L542.0 690L540.8 690ZM561.1 655L562.0 655L573.1 690L571.9 690ZM585.3 655L586.3 655L604.3 690L603.0 690ZM609.6 655L610.7 655L635.5 690L634.0 690ZM633.8 655L635.0 655L666.7 690L665.1 690ZM682.2 655L683.7 655L729.1 690L727.1 690ZM706.4 655L708.1 655L760.3 690L758.2 690ZM730.7 655L732.5 655L791.5 690L789.2 690ZM754.9 655L756.8 655L822.7 690L820.2 690ZM779.1 655L781.2 655L853.9 690L851.2 690ZM803.3 655L805.6 655L885.1 690L882.2 690ZM827.5 655L829.9 655L916.4 690L913.2 690ZM851.7 655L854.3 655L947.6 690L944.2 690ZM875.9 655L878.7 655L978.8 690L975.2 690ZM924.3 655L927.4 655L1041.2 690L1037.2 690ZM948.5 655L951.8 655L1072.5 690L1068.3 690ZM972.7 655L976.2 655L1103.7 690L1099.3 690ZM996.9 655L1000.5 655L1134.9 690L1130.3 690ZM1021.1 655L1024.9 655L1166.2 690L1161.3 690ZM1045.3 655L1049.3 655L1197.4 690L1192.3 690ZM1069.5 655L1073.7 655L1228.6 690L1223.3 690ZM1093.7 655L1098.0 655L1259.8 690L1254.3 690ZM1117.9 655L1122.4 655L1291.1 690L1285.3 690ZM1166.3 655L1171.2 655L1353.5 690L1347.3 690ZM1190.5 655L1195.5 655L1384.8 690L1378.3 690ZM1214.7 655L1219.9 655L1416.0 690L1409.3 690ZM1238.9 655L1244.3 655L1447.2 690L1440.3 690ZM1263.1 655L1268.7 655L1478.4 690L1471.3 690ZM1287.3 655L1293.0 655L1509.7 690L1502.3 690ZM1311.5 655L1317.4 655L1540.9 690L1533.3 690ZM1335.7 655L1341.8 655L1572.1 690L1564.3 690ZM1359.9 655L1366.2 655L1603.4 690L1595.3 690Z"/>
<path fill="#a6cfe2" fill-opacity=".75" d="M10.5 690L14.4 690L-113.0 730L-118.0 730ZM41.7 690L45.4 690L-74.2 730L-78.9 730ZM104.1 690L107.4 690L3.3 730L-0.8 730ZM135.4 690L138.4 690L42.1 730L38.3 730ZM166.6 690L169.4 690L80.9 730L77.3 730ZM197.8 690L200.5 690L119.7 730L116.4 730ZM229.0 690L231.5 690L158.5 730L155.4 730ZM260.2 690L262.5 690L197.3 730L194.5 730ZM291.4 690L293.5 690L236.1 730L233.5 730ZM322.6 690L324.5 690L274.9 730L272.5 730ZM353.8 690L355.6 690L313.7 730L311.6 730ZM416.2 690L417.6 690L391.3 730L389.6 730ZM447.4 690L448.7 690L430.2 730L428.6 730ZM478.6 690L479.8 690L469.1 730L467.5 730ZM509.7 690L510.9 690L508.0 730L506.5 730ZM540.8 690L542.0 690L546.9 730L545.4 730ZM571.9 690L573.1 690L585.8 730L584.3 730ZM603.0 690L604.3 690L624.8 730L623.1 730ZM634.0 690L635.5 690L663.8 730L662.0 730ZM665.1 690L666.7 690L702.8 730L700.8 730ZM727.1 690L729.1 690L780.9 730L778.4 730ZM758.2 690L760.3 690L819.9 730L817.2 730ZM789.2 690L791.5 690L858.9 730L856.0 730ZM820.2 690L822.7 690L898.0 730L894.8 730ZM851.2 690L853.9 690L937.0 730L933.6 730ZM882.2 690L885.1 690L976.1 730L972.4 730ZM913.2 690L916.4 690L1015.1 730L1011.2 730ZM944.2 690L947.6 690L1054.2 730L1050.0 730ZM975.2 690L978.8 690L1093.2 730L1088.8 730ZM1037.2 690L1041.2 690L1171.3 730L1166.3 730ZM1068.3 690L1072.5 690L1210.4 730L1205.1 730ZM1099.3 690L1103.7 690L1249.5 730L1243.9 730ZM1130.3 690L1134.9 690L1288.5 730L1282.7 730ZM1161.3 690L1166.2 690L1327.6 730L1321.5 730ZM1192.3 690L1197.4 690L1366.6 730L1360.2 730ZM1223.3 690L1228.6 690L1405.7 730L1399.0 730ZM1254.3 690L1259.8 690L1444.7 730L1437.8 730ZM1285.3 690L1291.1 690L1483.8 730L1476.6 730ZM1347.3 690L1353.5 690L1561.9 730L1554.1 730ZM1378.3 690L1384.8 690L1601.0 730L1592.9 730Z"/>
<path fill="#a6cfe2" fill-opacity=".90" d="M-0.8 730L3.3 730L-126.8 780L-131.9 780ZM38.3 730L42.1 730L-78.3 780L-83.1 780ZM77.3 730L80.9 730L-29.8 780L-34.3 780ZM116.4 730L119.7 730L18.7 780L14.6 780ZM155.4 730L158.5 730L67.3 780L63.4 780ZM194.5 730L197.3 730L115.8 780L112.2 780ZM233.5 730L236.1 730L164.3 780L161.1 780ZM272.5 730L274.9 730L212.8 780L209.9 780ZM311.6 730L313.7 730L261.4 780L258.7 780ZM389.6 730L391.3 730L358.5 780L356.3 780ZM428.6 730L430.2 730L407.1 780L405.0 780ZM467.5 730L469.1 730L455.7 780L453.8 780ZM506.5 730L508.0 730L504.3 780L502.5 780ZM545.4 730L546.9 730L553.0 780L551.1 780ZM584.3 730L585.8 730L601.7 780L599.8 780ZM623.1 730L624.8 730L650.4 780L648.4 780ZM662.0 730L663.8 730L699.2 780L697.0 780ZM700.8 730L702.8 730L748.0 780L745.5 780ZM778.4 730L780.9 730L845.6 780L842.6 780ZM817.2 730L819.9 730L894.4 780L891.1 780ZM856.0 730L858.9 730L943.2 780L939.6 780ZM894.8 730L898.0 730L992.1 780L988.2 780ZM933.6 730L937.0 730L1040.9 780L1036.7 780ZM972.4 730L976.1 730L1089.7 780L1085.2 780ZM1011.2 730L1015.1 730L1138.6 780L1133.7 780ZM1050.0 730L1054.2 730L1187.4 780L1182.2 780ZM1088.8 730L1093.2 730L1236.3 780L1230.7 780ZM1166.3 730L1171.3 730L1334.0 780L1327.7 780ZM1205.1 730L1210.4 730L1382.8 780L1376.2 780ZM1243.9 730L1249.5 730L1431.6 780L1424.7 780ZM1282.7 730L1288.5 730L1480.5 780L1473.2 780ZM1321.5 730L1327.6 730L1529.3 780L1521.7 780ZM1360.2 730L1366.6 730L1578.2 780L1570.2 780Z"/>
<path fill="#a6cfe2" fill-opacity="1" d="M14.6 780L18.7 780L-156.9 867L-162.5 867ZM63.4 780L67.3 780L-91.5 867L-96.7 867ZM112.2 780L115.8 780L-26.0 867L-30.8 867ZM161.1 780L164.3 780L39.4 867L35.0 867ZM209.9 780L212.8 780L104.8 867L100.9 867ZM258.7 780L261.4 780L170.3 867L166.7 867ZM356.3 780L358.5 780L301.3 867L298.3 867ZM405.0 780L407.1 780L366.8 867L364.1 867ZM453.8 780L455.7 780L432.4 867L429.8 867ZM502.5 780L504.3 780L498.0 867L495.5 867ZM551.1 780L553.0 780L563.6 867L561.1 867ZM599.8 780L601.7 780L629.3 867L626.7 867ZM648.4 780L650.4 780L695.1 867L692.3 867ZM697.0 780L699.2 780L760.8 867L757.8 867ZM745.5 780L748.0 780L826.6 867L823.3 867ZM842.6 780L845.6 780L958.3 867L954.2 867ZM891.1 780L894.4 780L1024.1 867L1019.7 867ZM939.6 780L943.2 780L1090.0 867L1085.1 867ZM988.2 780L992.1 780L1155.8 867L1150.5 867ZM1036.7 780L1040.9 780L1221.7 867L1216.0 867ZM1085.2 780L1089.7 780L1287.5 867L1281.4 867ZM1133.7 780L1138.6 780L1353.4 867L1346.8 867ZM1182.2 780L1187.4 780L1419.3 867L1412.2 867ZM1230.7 780L1236.3 780L1485.2 867L1477.6 867ZM1327.7 780L1334.0 780L1616.9 867L1608.5 867ZM1376.2 780L1382.8 780L1682.8 867L1673.9 867Z"/>
<path fill="#74a8c6" fill-opacity=".15" d="M8.1 553L32.7 553L-235.1 565L-259.7 565ZM53.1 553L75.5 553L-168.9 565L-191.3 565ZM98.0 553L118.3 553L-102.7 565L-122.9 565ZM143.0 553L161.1 553L-36.4 565L-54.6 565ZM889.1 553L907.5 553L1107.9 565L1089.5 565Z"/>
<path fill="#74a8c6" fill-opacity=".20" d="M188.0 553L204.0 553L29.8 565L13.8 565ZM232.9 553L246.8 553L96.0 565L82.2 565ZM277.9 553L289.6 553L162.3 565L150.6 565ZM322.9 553L332.4 553L228.5 565L218.9 565ZM367.8 553L375.3 553L294.8 565L287.3 565ZM412.8 553L418.1 553L361.0 565L355.7 565ZM457.7 553L461.0 553L427.3 565L424.0 565ZM502.5 553L503.9 553L493.7 565L492.2 565ZM546.3 553L547.9 553L561.1 565L559.4 565ZM589.2 553L592.8 553L629.3 565L625.8 565ZM632.1 553L637.7 553L697.6 565L692.0 565ZM674.9 553L682.7 553L766.0 565L758.3 565ZM717.8 553L727.6 553L834.4 565L824.5 565ZM760.6 553L772.6 553L902.7 565L890.8 565ZM803.4 553L817.5 553L971.1 565L957.0 565ZM846.2 553L862.5 553L1039.5 565L1023.2 565Z"/>
<path fill="#74a8c6" fill-opacity=".25" d="M13.8 565L29.8 565L-187.9 580L-203.9 580ZM82.2 565L96.0 565L-92.4 580L-106.2 580ZM150.6 565L162.3 565L3.1 580L-8.6 580ZM218.9 565L228.5 565L98.6 580L89.0 580ZM287.3 565L294.8 565L194.1 580L186.7 580ZM355.7 565L361.0 565L289.6 580L284.3 580ZM424.0 565L427.3 565L385.2 580L381.9 580ZM492.2 565L493.7 565L480.8 580L479.4 580ZM559.4 565L561.1 565L577.5 580L575.8 580ZM625.8 565L629.3 565L675.0 580L671.5 580ZM692.0 565L697.6 565L772.6 580L767.0 580ZM758.3 565L766.0 565L870.2 580L862.5 580ZM824.5 565L834.4 565L967.8 580L958.0 580ZM890.8 565L902.7 565L1065.5 580L1053.5 580ZM957.0 565L971.1 565L1163.1 580L1149.0 580ZM1023.2 565L1039.5 565L1260.7 580L1244.5 580ZM1089.5 565L1107.9 565L1358.4 580L1340.0 580Z"/>
<path fill="#74a8c6" fill-opacity=".35" d="M-8.6 580L3.1 580L-209.1 600L-220.8 600ZM89.0 580L98.6 580L-74.6 600L-84.2 600ZM186.7 580L194.1 580L59.9 600L52.5 600ZM284.3 580L289.6 580L194.5 600L189.1 600ZM381.9 580L385.2 580L329.0 600L325.7 600ZM479.4 580L480.8 580L463.7 600L462.2 600ZM575.8 580L577.5 580L599.3 600L597.7 600ZM671.5 580L675.0 580L735.9 600L732.3 600ZM767.0 580L772.6 580L872.5 600L866.9 600ZM862.5 580L870.2 580L1009.1 600L1001.4 600ZM958.0 580L967.8 580L1145.8 600L1135.9 600ZM1053.5 580L1065.5 580L1282.4 600L1270.4 600ZM1149.0 580L1163.1 580L1419.1 600L1405.0 600ZM1244.5 580L1260.7 580L1555.7 600L1539.5 600ZM1340.0 580L1358.4 580L1692.4 600L1674.0 600Z"/>
<path fill="#74a8c6" fill-opacity=".50" d="M52.5 600L59.9 600L-107.8 625L-115.3 625ZM189.1 600L194.5 600L75.5 625L70.1 625ZM325.7 600L329.0 600L258.8 625L255.5 625ZM462.2 600L463.7 600L442.2 625L440.8 625ZM597.7 600L599.3 600L626.7 625L625.1 625ZM732.3 600L735.9 600L812.0 625L808.5 625ZM866.9 600L872.5 600L997.4 625L991.8 625ZM1001.4 600L1009.1 600L1182.8 625L1175.1 625ZM1135.9 600L1145.8 600L1368.2 625L1358.4 625ZM1270.4 600L1282.4 600L1553.6 625L1541.6 625Z"/>
<path fill="#74a8c6" fill-opacity=".65" d="M70.1 625L75.5 625L-66.8 655L-73.1 655ZM255.5 625L258.8 625L174.9 655L171.0 655ZM440.8 625L442.2 625L416.7 655L415.0 655ZM625.1 625L626.7 625L659.7 655L657.7 655ZM808.5 625L812.0 625L903.7 655L899.5 655ZM991.8 625L997.4 625L1147.8 655L1141.1 655ZM1175.1 625L1182.8 625L1391.9 655L1382.7 655ZM1358.4 625L1368.2 625L1636.0 655L1624.3 655Z"/>
<path fill="#74a8c6" fill-opacity=".85" d="M171.0 655L174.9 655L77.2 690L72.2 690ZM415.0 655L416.7 655L386.9 690L384.7 690ZM657.7 655L659.7 655L698.2 690L695.7 690ZM899.5 655L903.7 655L1010.8 690L1005.4 690ZM1141.1 655L1147.8 655L1323.6 690L1315.0 690ZM1382.7 655L1391.9 655L1636.3 690L1624.6 690Z"/>
<path fill="#74a8c6" fill-opacity=".95" d="M72.2 690L77.2 690L-34.5 730L-40.8 730ZM384.7 690L386.9 690L352.9 730L350.2 730ZM695.7 690L698.2 690L742.3 730L739.2 730ZM1005.4 690L1010.8 690L1133.3 730L1126.6 730ZM1315.0 690L1323.6 690L1524.4 730L1513.8 730Z"/>
<path fill="#74a8c6" fill-opacity="1" d="M350.2 730L352.9 730L310.4 780L307.0 780ZM307.0 780L310.4 780L236.5 867L231.8 867ZM739.2 730L742.3 730L797.4 780L793.5 780ZM793.5 780L797.4 780L893.2 867L888.0 867ZM1126.6 730L1133.3 730L1286.4 780L1278.0 780ZM1278.0 780L1286.4 780L1552.7 867L1541.4 867Z"/>
</g>
<path d="M0 554H957L1540 589.3" fill="none" stroke="#7db5d3" stroke-width="1.2"/>
<g id="holebox">
<path d="M243 551L804 551.500L1110 581L-61 578.500Z" fill="url(#st3)"/>
<path d="M-61 578.500L1110 581V616L-61 614.500Z" fill="url(#st1)"/>
<path d="M243 569H803L1108 616L-61 614.500Z" fill="url(#st2)"/>
<path d="M-61 615.500L1112 617.200V578.400L804 551L790 551M256 550.600L243 550.300L-61 578.500" fill="none" stroke="#3db4e6" stroke-width="2.6" stroke-linejoin="round"/>
<path d="M-61 613.500L1110 615V580.200L804 553L790 553M256 552.400L243 552.200L-61 580" fill="none" stroke="#2b343c" stroke-width="1.2"/>
<path d="M0 578.700L1110 581" fill="none" stroke="#3a444e" stroke-width="1.200"/>
<path d="M243 569L-61 614.500M803 569L1108.500 615.500" fill="none" stroke="#3db4e6" stroke-width="1.6"/>
<path d="M243 569L-61 614.500M803 569L1108.500 615.500" fill="none" stroke="#111" stroke-width="1.6" stroke-dasharray="3 2.5"/>
<path d="M0 613.500L1110 615" fill="none" stroke="#15191d" stroke-width="1.4" stroke-dasharray="9 3"/>
<path d="M243 552V569M803 553V569" stroke="#2b343c" stroke-width="1" fill="none"/>
</g>
<g id="cylinder">
<path d="M256.5 405.0L257.0 400.2L258.5 396.2L261.0 392.6L264.4 389.1L268.8 385.8L274.2 382.7L280.6 379.7L287.8 376.8L296.0 374.1L305.1 371.6L315.0 369.1L325.8 366.9L337.5 364.8L349.9 362.9L363.1 361.1L377.1 359.6L391.9 358.2L407.4 356.9L423.7 355.9L440.7 355.0L458.7 354.4L477.6 353.9L498.1 353.6L523.0 353.5L547.9 353.6L568.4 353.9L587.3 354.4L605.3 355.0L622.3 355.9L638.6 356.9L654.1 358.2L668.9 359.6L682.9 361.1L696.1 362.9L708.5 364.8L720.2 366.9L731.0 369.1L740.9 371.6L750.0 374.1L758.2 376.8L765.4 379.7L771.8 382.7L777.2 385.8L781.6 389.1L785.0 392.6L787.5 396.2L789.0 400.2L789.5 405.0L789.5 568.0L789.0 570.8L787.5 573.1L785.0 575.2L781.6 577.3L777.2 579.2L771.8 581.0L765.4 582.8L758.2 584.4L750.0 586.0L740.9 587.5L731.0 588.9L720.2 590.2L708.5 591.4L696.1 592.5L682.9 593.6L668.9 594.5L654.1 595.3L638.6 596.0L622.3 596.6L605.3 597.1L587.3 597.5L568.4 597.8L547.9 597.9L523.0 598.0L498.1 597.9L477.6 597.8L458.7 597.5L440.7 597.1L423.7 596.6L407.4 596.0L391.9 595.3L377.1 594.5L363.1 593.6L349.9 592.5L337.5 591.4L325.8 590.2L315.0 588.9L305.1 587.5L296.0 586.0L287.8 584.4L280.6 582.8L274.2 581.0L268.8 579.2L264.4 577.3L261.0 575.2L258.5 573.1L257.0 570.8L256.5 568.0Z" fill="url(#cyl)"/>
<path d="M789.5 568.0L789.0 570.8L787.5 573.1L785.0 575.2L781.6 577.3L777.2 579.2L771.8 581.0L765.4 582.8L758.2 584.4L750.0 586.0L740.9 587.5L731.0 588.9L720.2 590.2L708.5 591.4L696.1 592.5L682.9 593.6L668.9 594.5L654.1 595.3L638.6 596.0L622.3 596.6L605.3 597.1L587.3 597.5L568.4 597.8L547.9 597.9L523.0 598.0L498.1 597.9L477.6 597.8L458.7 597.5L440.7 597.1L423.7 596.6L407.4 596.0L391.9 595.3L377.1 594.5L363.1 593.6L349.9 592.5L337.5 591.4L325.8 590.2L315.0 588.9L305.1 587.5L296.0 586.0L287.8 584.4L280.6 582.8L274.2 581.0L268.8 579.2L264.4 577.3L261.0 575.2L258.5 573.1L257.0 570.8L256.5 568.0" fill="none" stroke="#39a3d2" stroke-width="2.200"/>
<path d="M256.5 570L256.5 405.0L257.0 400.2L258.5 396.2L261.0 392.6L264.4 389.1L268.8 385.8L274.2 382.7L280.6 379.7L287.8 376.8L296.0 374.1L305.1 371.6L315.0 369.1L325.8 366.9L337.5 364.8L349.9 362.9L363.1 361.1L377.1 359.6L391.9 358.2L407.4 356.9L423.7 355.9L440.7 355.0L458.7 354.4L477.6 353.9L498.1 353.6L523.0 353.5L547.9 353.6L568.4 353.9L587.3 354.4L605.3 355.0L622.3 355.9L638.6 356.9L654.1 358.2L668.9 359.6L682.9 361.1L696.1 362.9L708.5 364.8L720.2 366.9L731.0 369.1L740.9 371.6L750.0 374.1L758.2 376.8L765.4 379.7L771.8 382.7L777.2 385.8L781.6 389.1L785.0 392.6L787.5 396.2L789.0 400.2L789.5 405.0L789.5 570" fill="none" stroke="#3db4e6" stroke-width="3.400"/>
<g clip-path="url(#cylc)">
<path d="M251.0 413L251.0 413.0L251.5 408.0L253.0 403.9L255.6 400.1L259.1 396.5L263.6 393.1L269.1 389.8L275.6 386.7L283.0 383.7L291.3 380.9L300.6 378.3L310.7 375.8L321.8 373.4L333.6 371.3L346.3 369.3L359.8 367.4L374.1 365.8L389.2 364.3L405.0 363.1L421.6 362.0L439.0 361.1L457.3 360.4L476.7 359.9L497.6 359.6L523.0 359.5L548.4 359.6L569.3 359.9L588.7 360.4L607.0 361.1L624.4 362.0L641.0 363.1L656.8 364.3L671.9 365.8L686.2 367.4L699.7 369.3L712.4 371.3L724.2 373.4L735.3 375.8L745.4 378.3L754.7 380.9L763.0 383.7L770.4 386.7L776.9 389.8L782.4 393.1L786.9 396.5L790.4 400.1L793.0 403.9L794.5 408.0L795.0 413.0L795.0 413" fill="none" stroke="#5d4c3a" stroke-width="14" opacity=".8" filter="url(#bl)"/>
<rect x="250" y="569.500" width="545" height="35" fill="#374143"/>
<path d="M257 569.500H790" stroke="#2c2521" stroke-width="1" stroke-dasharray="7 3" fill="none"/>
<path d="M257 579.300L790 580.400" stroke="#27313a" stroke-width="1.200" fill="none"/>
<path d="M521.500 393V569" stroke="#2f2722" stroke-width="1" stroke-dasharray="6 3" fill="none"/>
</g>
<path d="M257.9 405.0L258.4 400.3L259.9 396.5L262.3 392.9L265.8 389.5L270.2 386.3L275.5 383.3L281.8 380.4L289.1 377.6L297.2 374.9L306.2 372.5L316.1 370.1L326.9 367.9L338.4 365.9L350.8 364.0L364.0 362.3L377.9 360.8L392.6 359.4L408.0 358.2L424.2 357.2L441.2 356.4L459.0 355.7L477.9 355.3L498.3 355.0L523.0 354.9L547.7 355.0L568.1 355.3L587.0 355.7L604.8 356.4L621.8 357.2L638.0 358.2L653.4 359.4L668.1 360.8L682.0 362.3L695.2 364.0L707.6 365.9L719.1 367.9L729.9 370.1L739.8 372.5L748.8 374.9L756.9 377.6L764.2 380.4L770.5 383.3L775.8 386.3L780.2 389.5L783.7 392.9L786.1 396.5L787.6 400.3L788.1 405.0L788.1 568.0L787.6 570.7L786.1 572.9L783.7 574.9L780.2 576.9L775.8 578.7L770.5 580.4L764.2 582.1L756.9 583.7L748.8 585.2L739.8 586.6L729.9 588.0L719.1 589.2L707.6 590.4L695.2 591.5L682.0 592.4L668.1 593.3L653.4 594.1L638.0 594.8L621.8 595.4L604.8 595.8L587.0 596.2L568.1 596.5L547.7 596.6L523.0 596.7L498.3 596.6L477.9 596.5L459.0 596.2L441.2 595.8L424.2 595.4L408.0 594.8L392.6 594.1L377.9 593.3L364.0 592.4L350.8 591.5L338.4 590.4L326.9 589.2L316.1 588.0L306.2 586.6L297.2 585.2L289.1 583.7L281.8 582.1L275.5 580.4L270.2 578.7L265.8 576.9L262.3 574.9L259.9 572.9L258.4 570.7L257.9 568.0Z" fill="none" stroke="#14110f" stroke-width="1.100"/>
</g>
<g id="handles">
<path d="M521.3 320.5L526.8 332.6Q521.3 335.4 515.8 332.6Z" fill="#2a2a2a"/>
<g fill="#f1f1f1" stroke="#333" stroke-width="1.6"><rect x="517.3" y="383.3" width="8" height="8"/><rect x="238.2" y="564.2" width="9.6" height="9.6"/><rect x="798.2" y="564.2" width="9.6" height="9.6"/><rect x="1103.600" y="610.800" width="9.600" height="9.600"/></g>
<g fill="#333"><rect x="145" y="580.200" width="6" height="6"/><rect x="900" y="581.300" width="6" height="6"/><rect x="518.500" y="611" width="6" height="6"/><rect x="518.5" y="566.5" width="6" height="6" opacity=".35"/></g>
<path d="M512 399l5-5M531 399l-5-5" stroke="#3a302a" stroke-width="2" fill="none" opacity=".8"/>
<path d="M145 367c-1-5 1-9 3-9s2 3 2 5m0-3c2 0 3 3 2 7" stroke="#555" stroke-width="1" fill="none"/>
</g>
</svg>

<div id="topbar">
<div class="nav on" style="left:1360px;width:44px"><svg width="44" height="39"><g fill="#f4f4f4"><rect x="11.2" y="5.8" width="6.4" height="6.4" rx=".6"/><rect x="19" y="5.8" width="6.4" height="6.4" rx=".6"/><rect x="26.8" y="5.8" width="6.4" height="6.4" rx=".6"/><rect x="11.2" y="13.6" width="6.4" height="6.4" rx=".6"/><rect x="19" y="13.6" width="6.4" height="6.4" rx=".6"/><rect x="26.8" y="13.6" width="6.4" height="6.4" rx=".6"/><rect x="11.2" y="21.4" width="6.4" height="6.4" rx=".6"/><rect x="19" y="21.4" width="6.4" height="6.4" rx=".6"/><rect x="26.8" y="21.4" width="6.4" height="6.4" rx=".6"/></g></svg></div>
<div class="nav" style="left:1404px;width:45.5px"><svg width="46" height="39"><g transform="translate(-1.600 .3)"><g fill="none" stroke="#2d3e54" stroke-width="2.400" stroke-linecap="round"><path d="M26 10.2c5.500-.8 9 4.500 8.600 10.500c-.4 5.500-4 9-9.600 9c-6.500 0-11.500-4-10.500-10.500c.8-5.500 5.500-8.200 11.500-9z"/><path d="M22.800 0v6.200M27.800 1.200v5.800M32.700 5v6.500" stroke-width="1.9"/><path d="M25.500 15c1.800.3 3 1.400 3.600 3" stroke-width="1.5"/></g><path d="M16.500 4c3 1.500 4 4.500 2.300 7.600l-6 1.200v-1.200l3.200-.6c-2-2.200-1.800-5 .5-7z" fill="#2d3e54"/></g></svg></div>
<div class="nav" style="left:1449.500px;width:45px"><svg width="45" height="39"><g fill="none" stroke="#2d3e54"><path d="M10 29L24.300 14.700" stroke-width="3.100" stroke-dasharray="1.700 .45"/><path d="M12.200 6.600l2.800-2h7.500l4.500 2.600l4 2.800" stroke-width="2"/><path d="M15.500 9h5.500l5 3.500l4.500 4" stroke-width="1.900"/><path d="M31 9.500c3.500 4.500 5.200 10 3.300 17.500" stroke-width="3.100"/></g><path d="M8.700 30.200l3.300-3.300l1.700 1.700l-3.300 3.300z" fill="#2d3e54"/></svg></div>
<div class="nav" style="left:1494.500px;width:45.500px"><svg width="46" height="39"><path transform="translate(-1 0)" d="M10.600 25.200V12.600q0-.8.800-.8h2.300V8.800q0-.8.800-.8h4.700q.8 0 .8.800v3h3.900V8.800q0-.8.800-.8h4.700q.8 0 .8.800v3h2.300q.8 0 .8.800v12.600z" fill="#34465c"/></svg></div>
</div>
<div id="toolbar"></div>
<div class="sep" style="left:963px"></div><div class="sep" style="left:1159.500px"></div><div class="sep" style="left:1289px"></div><div class="sep" style="left:1375px"></div>
<svg id="ticons" width="420" height="40" viewBox="960 40 420 40">
<g fill="none" stroke="#b9c5d0" stroke-width="1.600" stroke-linecap="round"><path d="M979.400 66.200c-.3-3.500-4.200-5.200-4.200-9.700a8 8 0 0 1 16 0c0 4.500-3.900 6.200-4.200 9.700z"/><path d="M979.800 69.300h6.800M981 72.200h4.400"/><path d="M978.500 53.500a5 5 0 0 1 3-2.800" stroke-width="1.100"/></g>
<path d="M1002.300 49.700V71" stroke="#cdd2d7" stroke-width="1.200"/>
<path d="M1010.500 56.500h9l-4.500 6.200z" fill="#222"/>
<g><path d="M1043.500 48.700H1058.800M1043.500 71H1058.800M1040 52.200V67.500M1062.300 52.200V67.500" fill="none" stroke="#a9cdf0" stroke-width="1.600"/><g fill="#1f2d3f"><circle cx="1040" cy="48.700" r="1.500"/><circle cx="1062.300" cy="48.700" r="1.500"/><circle cx="1040" cy="71" r="1.500"/><circle cx="1062.300" cy="71" r="1.500"/></g><rect x="1043.200" y="52.800" width="9" height="9.200" fill="#a9cff4" stroke="#1f2d3f" stroke-width="1.700"/><circle cx="1055" cy="62.800" r="5.300" fill="#e6e7e9" stroke="#1f2d3f" stroke-width="1.700"/></g>
<g><path d="M1084.600 50.600H1097.800V54.800A7.400 7.400 0 1 1 1090.100 63.200H1084.600Z" fill="#a9cff4" stroke="#1f2d3f" stroke-width="1.800" stroke-linejoin="round"/><path d="M1097.800 55.800V63.200H1091M1096.800 55a7.400 7.400 0 0 0-6.600 7.200" fill="none" stroke="#86b0dc" stroke-width="1"/></g>
<g stroke="#c0c9d1" fill="none" stroke-width="1.500"><rect x="1126" y="49.800" width="9.500" height="9" fill="#bcc5cd" stroke="none"/><circle cx="1143.500" cy="66.200" r="5.200"/><path d="M1140 50l1.500 3M1146.500 53.500l-2.500 2M1148.500 58.500l-3 .5M1128 63l3 .5M1129.500 68.500l2.500-1.500M1134 72l1.500-3" stroke-linecap="round"/></g>
<g stroke="#1d2a33" fill="none"><path d="M1173.500 48.200V71.900" stroke-width="1.900"/><rect x="1178.300" y="53.300" width="11.600" height="5.300" stroke-width="1.700"/><rect x="1178.300" y="62.300" width="7.200" height="5.300" stroke-width="1.700" fill="#9aa3ab"/></g>
<g stroke="#1d2a33" fill="none"><path d="M1223.900 46.600V73.800" stroke-width="2.100"/><path d="M1220.400 53.800V67.900H1211.800Z" stroke-width="1.200" stroke-linejoin="round"/><path d="M1228.200 54.200V67.300H1236.200Z" stroke-width="2.400" stroke-linejoin="round"/></g>
<g fill="none" stroke="#1d2a33"><g transform="translate(1263.600 55.600) rotate(-19.500)"><path d="M-7.300 10V0A7.300 7.300 0 0 1 7.300 0V10H2.500V0A2.500 2.500 0 0 0-2.500 0V10Z" stroke-width="2.200" stroke-linejoin="round"/><path d="M-7.300 6.300H-2.500M2.500 6.300H7.300" stroke-width="1.500"/></g><path d="M1254.600 69.600c2.500 2.800 5.500 3.200 8.500 2c4.500-1.800 6.500-4.200 10-3.800c2.800.3 4.800 1.500 6.800 3.300" stroke-width="2.100" stroke-dasharray="2.100 1.600"/></g>
<g fill="none" stroke="#b7c6d2" stroke-width="1.700" stroke-linejoin="round"><path d="M1301 56.500l7.500-7l6.500 8.500l-9 6.500z"/><path d="M1315 58l4-4l4 5.500l-18 12l-4-6.500l5-1"/><path d="M1303.500 68l16-10.500M1307 65.500l1.500 2.500M1311 63l1.500 2.500M1315 60.500l1.500 2.500"/></g>
<g fill="none" stroke="#1d2a33" stroke-linejoin="round"><path d="M1354.100 49.100v6.800M1351 53.200l3.100 3.200l3.100-3.200" stroke-width="1.700"/><path d="M1349.500 65.500v-8h2M1358.700 65.500v-8h-2" stroke-width="1.700"/><path d="M1349 60.800h-2.200l-2.600 9.500h19.800l-2.600-9.500h-2.200" stroke-width="1.900"/><path d="M1345.500 66h17.200" stroke-width="1.500"/><path d="M1347 68.200h14.500" stroke-width="2.200" stroke-dasharray="2.600 1.300"/></g>
</svg>
<div class="tbtn" style="left:1387.500px;width:72px">Импорт</div>
<div class="tbtn" style="left:1465.500px;width:73px">Экспорт</div>
<div id="redbox"></div>

<div id="insp">
<div class="hd"></div>
<svg width="229" height="36" style="position:absolute;left:0;top:0"><path d="M11.800 18.800l6.300-6l6.300 6" fill="none" stroke="#2d3e54" stroke-width="2.500"/><path d="M168.700 13.600h11.400v7.800h-11.400z" fill="#4a5a6c"/><path d="M172.500 8.700A3.600 3.600 0 1 1 178.800 12L178 13.800" fill="none" stroke="#4a5a6c" stroke-width="2.100" stroke-linecap="round"/><g fill="none" stroke="#566475" stroke-width="1.700"><path d="M202.600 17.600c-.3-2.600-2.900-3.700-2.900-7a5.600 5.600 0 0 1 11.200 0c0 3.300-2.600 4.400-2.900 7z" fill="#c6ccd3"/><path d="M202.800 20h5" stroke-width="1.500"/><path d="M203.600 22h3.400" stroke-width="1.300" stroke="#8a95a2"/></g></svg>
<div class="ttl">Shapes(2)</div>
<div class="sw" style="left:43.500px;top:56.500px"></div><div class="sw" style="left:134.400px;top:56.500px"></div>
<svg width="229" height="120" style="position:absolute;left:0;top:0"><defs><pattern id="hs" width="9" height="9" patternUnits="userSpaceOnUse" patternTransform="rotate(-45)"><rect width="9" height="9" fill="#c4c4c4"/><rect width="9" height="4.200" fill="#a9a9a9"/></pattern></defs><circle cx="66.500" cy="79.600" r="17.700" fill="#47301d"/><circle cx="157.400" cy="79.600" r="17.700" fill="url(#hs)"/></svg>
<div class="lbl" style="left:21.500px">Тело</div><div class="lbl" style="left:112.400px">Отверстие</div>
</div>
<div id="side">
<div id="dd">Основные формы</div>
<div class="tile" style="left:8px;top:119.800px;height:83px"></div><div class="tile" style="left:85.800px;top:119.800px;height:83px"></div>
<div class="tile" style="left:8px;top:209.300px;height:82.500px"></div><div class="tile" style="left:85.800px;top:209.300px;height:82.500px"></div>
<div class="tile" style="left:8px;top:300.700px;height:83.500px"></div><div class="tile" style="left:85.800px;top:300.700px;height:83.500px"></div>
<div class="tile" style="left:8px;top:395px;height:82.300px"></div><div class="tile" style="left:85.800px;top:395px;height:82.300px"></div>
<div class="tile" style="left:8px;top:488.400px;height:81.600px"></div><div class="tile" style="left:85.800px;top:488.400px;height:81.600px"></div>
<div class="tile" style="left:8px;top:582px;height:81.400px"></div><div class="tile" style="left:85.800px;top:582px;height:81.400px"></div>
<div class="tile" style="left:8px;top:674px;height:82px"></div><div class="tile" style="left:85.800px;top:674px;height:82px"></div>
<div class="tile" style="left:8px;top:768px;height:40px"></div><div class="tile" style="left:85.800px;top:768px;height:40px"></div>
</div>
<div id="collapse"><svg width="14" height="41"><path d="M4.500 11.500L10.800 20.800L5 30.200" fill="none" stroke="#1a1a1a" stroke-width="1.900" stroke-linejoin="miter"/></svg></div>

<svg id="shapes" width="159" height="785" viewBox="1381 81 159 785" style="position:absolute;left:1381px;top:81px">
<defs>
<pattern id="hst" width="11" height="11" patternUnits="userSpaceOnUse" patternTransform="rotate(-40)"><rect width="11" height="11" fill="#c6cacf"/><rect width="5" height="11" fill="#b0b5bb"/></pattern>
<radialGradient id="sh"><stop offset="0" stop-color="#9a9da3" stop-opacity=".55"/><stop offset=".6" stop-color="#b5b8bd" stop-opacity=".3"/><stop offset="1" stop-color="#d8dadd" stop-opacity="0"/></radialGradient>
<linearGradient id="og" x1="0" x2="1"><stop offset="0" stop-color="#c66d22"/><stop offset=".55" stop-color="#d97d2e"/><stop offset="1" stop-color="#e08a3a"/></linearGradient>
<radialGradient id="sg" cx=".6" cy=".35" r=".7"><stop offset="0" stop-color="#4aa6dc"/><stop offset="1" stop-color="#2379b3"/></radialGradient>
<radialGradient id="mg" cx=".6" cy=".35" r=".8"><stop offset="0" stop-color="#d63a96"/><stop offset="1" stop-color="#a61e72"/></radialGradient>
<linearGradient id="pg" x1="0" x2="1"><stop offset="0" stop-color="#b9bbbd"/><stop offset=".5" stop-color="#e0e1e2"/><stop offset="1" stop-color="#bfc1c3"/></linearGradient>
</defs>
<!-- workplane icon -->
<g fill="none" stroke="#2a7fba" stroke-linejoin="round"><path d="M1404.500 99.200L1438.300 96.300V132L1405.700 128.700Z" stroke-width="2" fill="#eef2f6"/><path d="M1409.300 98.800l.9 30.300M1414.100 98.400l.7 31.200M1418.900 98l.5 32.100M1428.500 97.200l.2 33.800M1433.400 96.800l.1 34.700M1404.700 104.100l33.600-2.400M1404.900 109l33.400-1.700M1405.100 113.900l33.200-.8M1405.300 118.800l33 .3M1405.500 123.800l32.800 1.400" stroke-width="1.100"/><path d="M1423.700 97.600l.3 33" stroke-width="1.800"/></g>
<!-- ruler icon -->
<g fill="none" stroke="#2a7fba" stroke-linejoin="round"><path d="M1487.300 98.300l8.500-.2l.7 24.500l25.700 2.400l-.2 8l-33-3.800z" stroke-width="2" fill="#eef2f6"/><path d="M1491 104.500h3.500M1491 110h3.500M1491 116h3.500M1497 124.500v3M1503 125v3.500M1509 125.500v3.500M1515 126v3.500" stroke-width="1.200"/></g>
<!-- shadows -->
<g fill="url(#sh)"><ellipse cx="1426" cy="245" rx="30" ry="32" opacity=".35"/><ellipse cx="1504" cy="245" rx="26" ry="30" opacity=".35"/><ellipse cx="1426" cy="335" rx="26" ry="30" opacity=".4"/><ellipse cx="1504" cy="332" rx="27" ry="28" opacity=".5"/><ellipse cx="1427" cy="424" rx="26" ry="28" opacity=".5"/><ellipse cx="1504" cy="426" rx="30" ry="28" opacity=".7"/><ellipse cx="1425" cy="520" rx="32" ry="30" opacity=".8"/><ellipse cx="1505" cy="517" rx="33" ry="28" opacity=".9"/><ellipse cx="1426" cy="616" rx="30" ry="30" opacity=".7"/><ellipse cx="1504" cy="614" rx="28" ry="26" opacity=".7"/><ellipse cx="1426" cy="708" rx="26" ry="30" opacity=".6"/><ellipse cx="1504" cy="704" rx="28" ry="24" opacity=".7"/><ellipse cx="1428" cy="796" rx="28" ry="26" opacity=".6"/><ellipse cx="1505" cy="800" rx="28" ry="24" opacity=".8"/></g>
<!-- box hole -->
<g stroke="#74787d" stroke-width="1" stroke-linejoin="round"><path d="M1416.300 217.700L1447.900 221.600L1438.900 239.600L1402.900 232.600Z" fill="url(#hst)"/><path d="M1402.900 232.600L1438.900 239.600L1437.500 270L1404.900 263.100Z" fill="url(#hst)"/><path d="M1438.900 239.600L1447.900 221.600L1447.200 254.800L1437.500 270Z" fill="url(#hst)"/></g>
<path d="M1402.900 232.600L1438.900 239.600L1437.500 270L1404.900 263.100Z" fill="#8d9298" opacity=".25"/>
<!-- cylinder hole -->
<g stroke="#74787d" stroke-width="1"><path d="M1486 228.300V258a18 8.500 0 0 0 36 0V228.300" fill="url(#hst)"/><ellipse cx="1504" cy="228.300" rx="18" ry="8.800" fill="url(#hst)"/></g>
<!-- orange cylinder -->
<path d="M1408.400 318.200L1410 347.500a16.200 8 0 0 0 32.400 0L1444.200 318.200Z" fill="url(#og)" stroke="#8a4a14" stroke-width=".8"/><ellipse cx="1426.300" cy="318.200" rx="17.900" ry="9.200" fill="#df863a" stroke="#9a5418" stroke-width=".8"/>
<!-- sphere -->
<circle cx="1504" cy="330.400" r="17.800" fill="url(#sg)"/>
<!-- scribble -->
<g stroke="#7686b4" stroke-width=".8" stroke-linejoin="round"><path d="M1412.400 436.800l.2 4.300c3.500.8 6.500-.4 9.500-1.400c6.500-2 12-4 15.600-6.800c2.800-3.500 3.400-7.200 3.900-10.800l1.400-3.500l-.4-6.200z" fill="#8797c6"/><path d="M1412.400 436.800c-.6-8 .4-16 2.900-21.500c1.700-2.700 4-4.700 6.800-5.800c3-.9 5.800-1 8.800-1l2.400-2.500l2.600.2l6.700 6.200l-.6 3.400l-1.600 .2l.2 3.200c-.3 3.400-.8 6.800-1.900 9.800c-4.500 4.500-12 5.600-19.500 6.800c-2.300.5-4.500 1-6.800 1z" fill="#adbdeb"/><circle cx="1427" cy="421" r="3.800" fill="#8191be" stroke="#6f7fae"/><path d="M1424.300 423.700l-11.600 12.600" fill="none" stroke="#6f7fae" stroke-width="1.200"/></g>
<!-- roof -->
<g stroke="#2c6e2a" stroke-width=".7" stroke-linejoin="round"><path d="M1481.600 437.700L1494.700 419.200L1509.300 409L1498.100 425.600Z" fill="#37853a"/><path d="M1481.600 437.700L1498.100 425.600L1516.600 445Z" fill="#429441"/><path d="M1509.300 409L1524.900 426L1516.600 445L1498.100 425.600Z" fill="#5aae53"/></g>
<!-- round roof -->
<g stroke="#3f8b99" stroke-width=".8" stroke-linejoin="round"><path d="M1404.100 528.700c1-6 10-24 19-26.800c2.500-.9 5.300-1.200 7.800-1c6 .6 11.500 3.500 13.600 7.300c1.500 2.800 2.300 5.800 2.500 8.800l-9.300 20.500z" fill="#73c3d0"/><path d="M1404.100 528.700c1.500-4.500 5-9 9.800-10.800c5-1.800 11-1 15.500 2.500c5 4 8 10.500 8.300 17.100z" fill="#61b2c0"/></g>
<!-- TEXT -->
<g transform="translate(1485 516) rotate(8.500) skewX(-13)" font-family="Liberation Sans,sans-serif" font-weight="bold" font-size="17" stroke-linejoin="round"><text x="3.6" y="9.5" fill="#8c1e1e" stroke="#8c1e1e" stroke-width="1.100" textLength="38.5" lengthAdjust="spacingAndGlyphs">TEXT</text><text x="3.0" y="8.0" fill="#8c1e1e" stroke="#8c1e1e" stroke-width="1.100" textLength="38.5" lengthAdjust="spacingAndGlyphs">TEXT</text><text x="2.5" y="6.5" fill="#921f1f" stroke="#921f1f" stroke-width="1.100" textLength="38.5" lengthAdjust="spacingAndGlyphs">TEXT</text><text x="1.9" y="5.0" fill="#982121" stroke="#982121" stroke-width="1.100" textLength="38.5" lengthAdjust="spacingAndGlyphs">TEXT</text><text x="1.3" y="3.5" fill="#9e2323" stroke="#9e2323" stroke-width="1.100" textLength="38.5" lengthAdjust="spacingAndGlyphs">TEXT</text><text x="0.8" y="2.0" fill="#a82626" stroke="#a82626" stroke-width="1.100" textLength="38.5" lengthAdjust="spacingAndGlyphs">TEXT</text><text x="0.4" y="1.0" fill="#b02929" stroke="#b02929" stroke-width="1.100" textLength="38.5" lengthAdjust="spacingAndGlyphs">TEXT</text><text x="0.0" y="0" fill="#cc3330" stroke="#cc3330" stroke-width=".9" textLength="38.5" lengthAdjust="spacingAndGlyphs">TEXT</text></g>
<!-- pyramid -->
<g stroke="#9c8418" stroke-width=".8" stroke-linejoin="round"><path d="M1426.400 595L1405.300 629L1435.800 637.300Z" fill="#e6c93a"/><path d="M1426.400 595L1446.200 617.600L1435.800 637.300Z" fill="#d2b42c"/></g>
<!-- half sphere -->
<path d="M1487 617c0-10 7.500-17.400 17.300-17.400s17.400 7.400 17.400 17.400c0 6.500-7.500 11-17.400 11s-17.300-4.500-17.300-11z" fill="url(#mg)"/>
<!-- paraboloid -->
<path d="M1426.100 687c-7 0-15.500 22-16.400 33.500c-.3 4.500 7 7.800 16.700 7.800s17-3.300 16.700-7.800c-.9-11.500-10-33.500-17-33.500z" fill="url(#pg)" stroke="#6d6f72" stroke-width=".8"/>
<!-- torus -->
<g><ellipse cx="1504.100" cy="704.200" rx="17.900" ry="12" fill="#2686c4"/><ellipse cx="1504.100" cy="702.500" rx="13" ry="7" fill="none" stroke="#3c9ad4" stroke-width="4"/><ellipse cx="1504.400" cy="703.500" rx="7.800" ry="3" fill="#e9ecef"/><path d="M1496.600 703.500a7.800 3 0 0 1 15.600 0a9 5 0 0 0-15.600 0z" fill="#1b6ea6"/></g>
<!-- heart -->
<g stroke="#4e321a" stroke-width=".8" stroke-linejoin="round"><path d="M1410.700 791l1.100 11c3 4 7 6.500 10.500 9.300c8.500-1.500 17-3.800 22.200-8.300l1.800-13z" fill="#77522f"/><path d="M1429.700 785.500c3-2 6-2.300 8.800-1.500c4 1 7.200 3 7.800 6c.3 3-1 5.500-2.700 7.500c-5.500 3-13 4-21.300 4.500c-4-2.500-8.800-5.500-11.200-9.500c-1-2.500-.8-4.600 .7-6.100c1.500-2 3.800-3.400 6.400-3.800c4.500-.6 8.500.8 11.500 2.900z" fill="#90683f"/><path d="M1422.300 802v9.300" fill="none"/></g>
<!-- star -->
<g stroke="#3f8fa6" stroke-width=".8" stroke-linejoin="round"><path d="M1489.400 795.600l11.300 1.200l7.500-4.800l2.600 5.600l11.300 3.900l-9.600 3.300l-1.500 6.500l-8.600-3.800l-12.600-.5l5.200-5.500z" fill="#7ec5d6"/><path d="M1508.200 792l-3.200 10.300l17.100-.8M1505 802.300l6 9M1505 802.300l-15.200 4.700M1505 802.300l-15.600-6.700" fill="none"/><path d="M1508.200 792l-3.200 10.300l-4.300-5.500zM1522.100 801.500l-17.100.8l7.500 2.500zM1511 811.300l-6-9l-2.600 5.200z" fill="#5eaec4"/></g>
</svg>

</body></html>
